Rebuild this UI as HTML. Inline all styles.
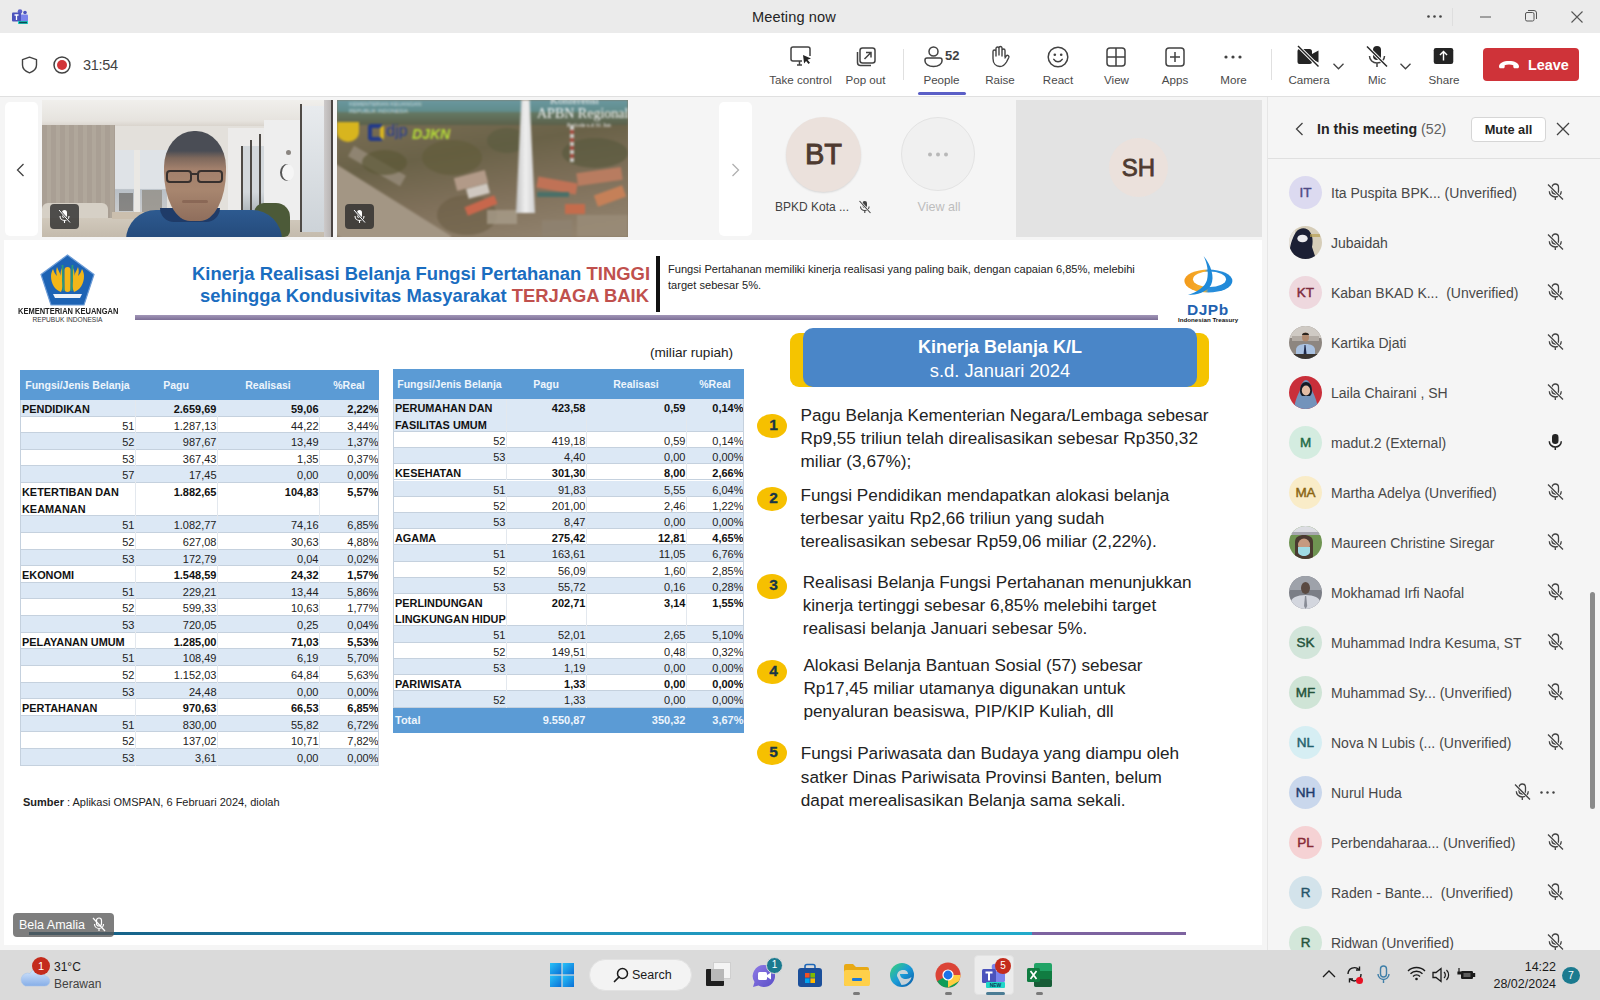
<!DOCTYPE html>
<html><head><meta charset="utf-8">
<style>
*{margin:0;padding:0;box-sizing:border-box}
html,body{width:1600px;height:1000px;overflow:hidden;background:#f5f5f5;font-family:"Liberation Sans",sans-serif;color:#242424}
.a{position:absolute}
#titlebar{left:0;top:0;width:1600px;height:33px;background:#ebebeb}
#toolbar{left:0;top:33px;width:1600px;height:64px;background:#fff;border-bottom:1px solid #e0e0e0}
#content{left:0;top:97px;width:1267px;height:853px;background:#f5f5f5}
#panel{left:1267px;top:97px;width:333px;height:853px;background:#f5f5f5;border-left:1px solid #e6e6e6}
#taskbar{left:0;top:950px;width:1600px;height:50px;background:#dadada}
.tb{font-size:11.6px;color:#4a4a4a;text-align:center;white-space:nowrap}
svg{position:absolute;overflow:visible}
</style></head><body>
<div id="titlebar" class="a">
<svg style="left:12px;top:9px" width="18" height="16" viewBox="0 0 18 16">
<circle cx="8" cy="2.5" r="2.3" fill="#5b5fc7"/><circle cx="13" cy="3.5" r="1.8" fill="#4b53bc"/>
<rect x="8" y="5.5" width="8" height="7" rx="1" fill="#7b83eb"/>
<rect x="0" y="3.5" width="9" height="9" rx="1" fill="#4b53bc"/>
<path d="M2.5 6h4M4.5 6v5" stroke="#fff" stroke-width="1.3"/>
<rect x="6" y="12" width="10" height="3" fill="#22d3c5"/><rect x="7" y="12.7" width="8" height="1.6" fill="#0b4a56"/>
</svg>
<div class="a" style="left:752px;top:9px;font-size:14.6px;color:#242424;letter-spacing:0.1px">Meeting now</div>
<svg style="left:1427px;top:15px" width="16" height="4"><circle cx="1.5" cy="1.5" r="1.3" fill="#444"/><circle cx="7.5" cy="1.5" r="1.3" fill="#444"/><circle cx="13.5" cy="1.5" r="1.3" fill="#444"/></svg>
<div class="a" style="left:1452px;top:8px;width:1px;height:18px;background:#dedede"></div>
<svg style="left:1480px;top:16px" width="12" height="2"><path d="M0 1h11" stroke="#555" stroke-width="1"/></svg>
<svg style="left:1525px;top:10px" width="12" height="12"><rect x="0.5" y="2.5" width="8.5" height="8.5" rx="1.5" fill="none" stroke="#555"/><path d="M3 0.5h6a2.5 2.5 0 0 1 2.5 2.5v6" fill="none" stroke="#555"/></svg>
<svg style="left:1571px;top:11px" width="12" height="12"><path d="M0.5 0.5l11 11M11.5 0.5l-11 11" stroke="#555" stroke-width="1.1"/></svg>
</div>
<div id="toolbar" class="a">
<svg style="left:21px;top:23px" width="17" height="18" viewBox="0 0 17 18"><path d="M8.5 1.2L15.5 3.6V9c0 3.6-2.8 6.3-7 7.8C4.3 15.3 1.5 12.6 1.5 9V3.6z" fill="none" stroke="#424242" stroke-width="1.4" stroke-linejoin="round"/></svg>
<svg style="left:53px;top:23px" width="18" height="18" viewBox="0 0 18 18"><circle cx="9" cy="9" r="8" fill="none" stroke="#424242" stroke-width="1.5"/><circle cx="9" cy="9" r="5" fill="#d13438"/></svg>
<div class="a" style="left:83px;top:24px;font-size:14.5px;color:#424242;letter-spacing:-0.3px">31:54</div>

<svg style="left:790px;top:13px" width="22" height="22" viewBox="0 0 22 22"><path d="M12 15H3a2 2 0 0 1-2-2V3a2 2 0 0 1 2-2h15a2 2 0 0 1 2 2v7" fill="none" stroke="#424242" stroke-width="1.5"/><path d="M7 19h5M9.5 15v4" stroke="#424242" stroke-width="1.5"/><path d="M13 9l8 3.5-3.5 1.2 2.5 3-1.5 1.3-2.4-3.1-2 2.6z" fill="#242424"/></svg>
<svg style="left:856px;top:14px" width="20" height="20" viewBox="0 0 20 20"><rect x="4" y="1" width="15" height="15" rx="2.5" fill="none" stroke="#424242" stroke-width="1.5"/><path d="M1.5 5v10.5a3 3 0 0 0 3 3H15" fill="none" stroke="#424242" stroke-width="1.5"/><path d="M8.5 12l6-6M10 5.5h5v5" fill="none" stroke="#424242" stroke-width="1.5"/></svg>
<div class="a" style="left:903px;top:16px;width:1px;height:31px;background:#e0e0e0"></div>
<svg style="left:924px;top:13px" width="19" height="22" viewBox="0 0 19 22"><circle cx="9.5" cy="5.5" r="4.5" fill="none" stroke="#424242" stroke-width="1.5"/><path d="M3 12h13a2 2 0 0 1 2 2v1c0 3-3.5 5.5-8.5 5.5S1 18 1 15v-1a2 2 0 0 1 2-2z" fill="none" stroke="#424242" stroke-width="1.5"/></svg>
<div class="a" style="left:945px;top:15px;font-size:13px;font-weight:bold;color:#424242">52</div>
<div class="a" style="left:918px;top:59px;width:48px;height:3px;border-radius:2px;background:#5b5fc7"></div>
<svg style="left:990px;top:12px;transform:scaleX(-1)" width="20" height="23" viewBox="0 0 20 23"><path d="M5 12V5.5a1.5 1.5 0 0 1 3 0V11M8 10V3a1.5 1.5 0 0 1 3 0v7M11 10V3.5a1.5 1.5 0 0 1 3 0V11M14 11V6.5a1.5 1.5 0 0 1 3 0v7c0 5-3 8-7 8-3 0-5-2-6.5-4.5L1.2 12.5a1.5 1.5 0 0 1 2.5-1.6L5 13" fill="none" stroke="#424242" stroke-width="1.4" stroke-linejoin="round" stroke-linecap="round"/></svg>
<svg style="left:1047px;top:13px" width="22" height="22" viewBox="0 0 22 22"><circle cx="11" cy="11" r="9.8" fill="none" stroke="#424242" stroke-width="1.5"/><circle cx="7.8" cy="8.7" r="1.3" fill="#424242"/><circle cx="14.2" cy="8.7" r="1.3" fill="#424242"/><path d="M6.8 13.3c1 1.6 2.5 2.4 4.2 2.4s3.2-.8 4.2-2.4" fill="none" stroke="#424242" stroke-width="1.5" stroke-linecap="round"/></svg>
<svg style="left:1106px;top:14px" width="20" height="20" viewBox="0 0 20 20"><rect x="1" y="1" width="18" height="18" rx="3" fill="none" stroke="#424242" stroke-width="1.5"/><path d="M10 1v18M1 10h18" stroke="#424242" stroke-width="1.5"/></svg>
<svg style="left:1165px;top:14px" width="20" height="20" viewBox="0 0 20 20"><rect x="1" y="1" width="18" height="18" rx="3" fill="none" stroke="#424242" stroke-width="1.5"/><path d="M10 5v10M5 10h10" stroke="#424242" stroke-width="1.5"/></svg>
<svg style="left:1224px;top:22px" width="18" height="4"><circle cx="2" cy="2" r="1.6" fill="#424242"/><circle cx="9" cy="2" r="1.6" fill="#424242"/><circle cx="16" cy="2" r="1.6" fill="#424242"/></svg>
<div class="a" style="left:1271px;top:16px;width:1px;height:31px;background:#e0e0e0"></div>
<svg style="left:1297px;top:12px" width="23" height="23" viewBox="0 0 23 23"><path d="M2.5 4h10a2.5 2.5 0 0 1 2.5 2.5v10a2.5 2.5 0 0 1-2.5 2.5h-10A2 2 0 0 1 .5 17V6a2 2 0 0 1 2-2z" fill="#242424"/><path d="M15 9l6.5-3.5v12L15 14z" fill="#242424"/><path d="M1 1l20.5 20.5" stroke="#fff" stroke-width="3.2"/><path d="M1 1l20.5 20.5" stroke="#242424" stroke-width="1.5"/></svg>
<svg style="left:1333px;top:30px" width="11" height="7"><path d="M0.5 0.8l5 5 5-5" fill="none" stroke="#424242" stroke-width="1.3"/></svg>
<svg style="left:1366px;top:12px" width="22" height="23" viewBox="0 0 22 23"><rect x="7" y="1" width="8" height="14" rx="4" fill="#242424"/><path d="M3.5 11c0 4 3.3 7 7.5 7s7.5-3 7.5-7M11 18v4" fill="none" stroke="#424242" stroke-width="1.5"/><path d="M1 1.5l20 20" stroke="#fff" stroke-width="3.2"/><path d="M1 1.5l20 20" stroke="#242424" stroke-width="1.5"/></svg>
<svg style="left:1400px;top:30px" width="11" height="7"><path d="M0.5 0.8l5 5 5-5" fill="none" stroke="#424242" stroke-width="1.3"/></svg>
<svg style="left:1433px;top:15px" width="21" height="16" viewBox="0 0 22 18"><rect x="0" y="0" width="22" height="18" rx="2.5" fill="#242424"/><path d="M11 14V4.5M7 8l4-4 4 4" fill="none" stroke="#fff" stroke-width="1.6"/></svg>
<div class="a" style="left:1483px;top:15px;width:96px;height:33px;border-radius:4px;background:#cf3339"></div>
<svg style="left:1498px;top:27px" width="22" height="9" viewBox="0 0 22 9"><path d="M1 6.5C1 3 5.5 1 11 1s10 2 10 5.5c0 1-.5 1.8-1.6 1.8h-2.6c-1 0-1.5-.6-1.5-1.5V5.3c-1.2-.5-2.6-.7-4.3-.7s-3.1.2-4.3.7v1.5c0 .9-.5 1.5-1.5 1.5H2.6C1.5 8.3 1 7.5 1 6.5z" fill="#fff"/></svg>
<div class="a" style="left:1528px;top:24px;font-size:14.4px;font-weight:bold;color:#fff">Leave</div>
<div class="a tb" style="left:760.5px;top:40px;width:80px;">Take control</div><div class="a tb" style="left:825.5px;top:40px;width:80px;">Pop out</div><div class="a tb" style="left:901.5px;top:40px;width:80px;">People</div><div class="a tb" style="left:960px;top:40px;width:80px;">Raise</div><div class="a tb" style="left:1018px;top:40px;width:80px;">React</div><div class="a tb" style="left:1076.5px;top:40px;width:80px;">View</div><div class="a tb" style="left:1135px;top:40px;width:80px;">Apps</div><div class="a tb" style="left:1193.5px;top:40px;width:80px;">More</div><div class="a tb" style="left:1269px;top:40px;width:80px;">Camera</div><div class="a tb" style="left:1337px;top:40px;width:80px;">Mic</div><div class="a tb" style="left:1404px;top:40px;width:80px;">Share</div></div>
<div id="content" class="a">
<!-- video strip: page y 100-237 ; content top = 97 -->
<div class="a" style="left:5px;top:5px;width:33px;height:134px;background:#fff;border-radius:5px"></div>
<svg style="left:16px;top:66px" width="9" height="14"><path d="M7.5 1L1.5 7l6 6" fill="none" stroke="#424242" stroke-width="1.3"/></svg>
<div id="vid1" class="a" style="left:42px;top:3px;width:291px;height:137px;overflow:hidden;background:#e3e0db"><div class="a" style="left:0;top:0;width:291px;height:137px;filter:blur(0.5px)">
<div class="a" style="left:0;top:0;width:291px;height:26px;background:linear-gradient(#f0efec,#e6e3de 80%,#d9d4cd)"></div>
<div class="a" style="left:0;top:25px;width:73px;height:96px;background:repeating-linear-gradient(90deg,#a99f94 0 5px,#b0a79b 5px 9px)"></div>
<div class="a" style="left:73px;top:50px;width:52px;height:62px;background:linear-gradient(#dfe3e7 0 62%,#b9c0c7 64%,#c9cbcc)"></div>
<div class="a" style="left:92px;top:50px;width:6px;height:62px;background:#eae8e4"></div>
<div class="a" style="left:77px;top:93px;width:14px;height:18px;background:#5e5a55;opacity:.6"></div>
<div class="a" style="left:100px;top:90px;width:20px;height:22px;background:#8d877e;opacity:.7"></div>
<div class="a" style="left:0;top:103px;width:66px;height:28px;background:#d6d0c6;border-radius:6px 6px 0 0"></div>
<div class="a" style="left:0;top:118px;width:291px;height:19px;background:linear-gradient(#d1c9bc,#c4bbad)"></div>
<div class="a" style="left:70px;top:112px;width:150px;height:7px;background:#cbbfae"></div>
<div class="a" style="left:186px;top:28px;width:70px;height:92px;background:#ecebea"></div>
<div class="a" style="left:199px;top:46px;width:48px;height:66px;background:linear-gradient(#d3d8dc 0 70%,#aeb5ba)"></div>
<div class="a" style="left:199px;top:46px;width:2px;height:66px;background:#4e4a46"></div>
<div class="a" style="left:208px;top:40px;width:2px;height:74px;background:#4e4a46"></div>
<div class="a" style="left:217px;top:34px;width:2px;height:80px;background:#4e4a46"></div>
<div class="a" style="left:222px;top:20px;width:36px;height:100px;background:#eeeeee"></div>
<div class="a" style="left:238px;top:64px;width:14px;height:17px;border-radius:50%;background:#f5f5f5;box-shadow:inset 2px 0 0 #555"></div>
<div class="a" style="left:244px;top:50px;width:5px;height:5px;border-radius:50%;background:#8a8580"></div>
<div class="a" style="left:258px;top:6px;width:24px;height:126px;background:linear-gradient(#e8ebee,#cdd3d8)"></div>
<div class="a" style="left:258px;top:4px;width:2px;height:128px;background:#4f4b47"></div>
<div class="a" style="left:282px;top:0;width:8px;height:137px;background:linear-gradient(90deg,#cdcaca,#b5b1b0)"></div>
<div class="a" style="left:289px;top:0;width:2px;height:137px;background:#4a4442"></div>
<div class="a" style="left:212px;top:103px;width:36px;height:34px;border-radius:10px 14px 6px 6px;background:#4c5a38"></div>
<div class="a" style="left:84px;top:110px;width:156px;height:32px;border-radius:30px 30px 0 0;background:linear-gradient(#2d5a90,#234878)"></div>
<div class="a" style="left:118px;top:108px;width:60px;height:14px;border-radius:0 0 30px 30px;background:#1f3b68"></div>
<div class="a" style="left:122px;top:31px;width:62px;height:90px;border-radius:48% 48% 42% 42%/40% 40% 55% 55%;background:linear-gradient(#4a4d55 0 22%,#7d685c 30%,#a2806c 42%,#a8866f 65%,#8f6e5c)"></div>
<div class="a" style="left:124px;top:70px;width:26px;height:13px;border-radius:4px;border:2.2px solid #37302e"></div>
<div class="a" style="left:155px;top:70px;width:26px;height:13px;border-radius:4px;border:2.2px solid #37302e"></div>
<div class="a" style="left:149px;top:73px;width:7px;height:2px;background:#37302e"></div>
<div class="a" style="left:140px;top:100px;width:26px;height:3px;background:#7d5a4b;border-radius:2px;opacity:.6"></div>
</div></div>
<div id="vid2" class="a" style="left:337px;top:3px;width:291px;height:137px;overflow:hidden;background:#857660"><div class="a" style="left:0;top:0;width:291px;height:137px;filter:blur(0.8px)">
<div class="a" style="left:0;top:0;width:291px;height:13px;background:linear-gradient(#6a98a0,#5f8a88)"></div>
<div class="a" style="left:0;top:12px;width:291px;height:13px;background:linear-gradient(#657a66,#5b604a)"></div>
<div class="a" style="left:0;top:25px;width:291px;height:112px;background:linear-gradient(170deg,#7a6e55 0%,#6a6248 30%,#7f705a 60%,#958672 100%)"></div>
<div class="a" style="left:-40px;top:92px;width:150px;height:60px;background:#a39684;transform:rotate(32deg)"></div>
<div class="a" style="left:10px;top:60px;width:60px;height:12px;background:#9d9282;transform:rotate(30deg);opacity:.7"></div>
<div class="a" style="left:25px;top:50px;width:45px;height:25px;border-radius:50%;background:#5c5838;opacity:.7"></div>
<div class="a" style="left:85px;top:40px;width:60px;height:35px;border-radius:50%;background:#625c3c;opacity:.7"></div>
<div class="a" style="left:100px;top:95px;width:60px;height:40px;border-radius:50%;background:#6a5e45;opacity:.6"></div>
<div class="a" style="left:225px;top:38px;width:66px;height:30px;border-radius:50%;background:#5a5a3e;opacity:.7"></div>
<div class="a" style="left:150px;top:28px;width:40px;height:25px;border-radius:50%;background:#5a5c40;opacity:.6"></div>
<div class="a" style="left:118px;top:74px;width:32px;height:13px;background:#b29a88;transform:rotate(-15deg)"></div>
<div class="a" style="left:130px;top:86px;width:22px;height:10px;background:#cfc8c0;transform:rotate(-15deg)"></div>
<div class="a" style="left:128px;top:101px;width:32px;height:9px;background:#c8674c;transform:rotate(-22deg)"></div>
<div class="a" style="left:150px;top:110px;width:30px;height:14px;background:#a89c8a;opacity:.8"></div>
<div class="a" style="left:200px;top:80px;width:40px;height:11px;background:#c07256;transform:rotate(10deg)"></div>
<div class="a" style="left:240px;top:70px;width:45px;height:13px;background:#b87c60;transform:rotate(-8deg)"></div>
<div class="a" style="left:228px;top:104px;width:20px;height:10px;background:#c46c4c"></div>
<div class="a" style="left:258px;top:90px;width:30px;height:12px;background:#c58058;transform:rotate(-20deg)"></div>
<div class="a" style="left:200px;top:92px;width:32px;height:5px;background:#4a7068"></div>
<div class="a" style="left:240px;top:115px;width:51px;height:22px;background:#9a8c78;opacity:.8"></div>
<div class="a" style="left:205px;top:120px;width:30px;height:17px;background:#8f8270;opacity:.8"></div>
<div class="a" style="left:233px;top:26px;width:4px;height:36px;background:repeating-linear-gradient(#e0e0e0 0 4px,#b44a40 4px 8px);opacity:.8"></div>
<div class="a" style="left:179px;top:0;width:19px;height:113px;background:linear-gradient(90deg,#c2c2c2,#efefef 50%,#cfcfcf);clip-path:polygon(28% 0,72% 0,100% 100%,0 100%)"></div>
<div class="a" style="left:0;top:22px;width:22px;height:20px;border-radius:0 0 50% 50%;background:#d8b51e"></div>
<div class="a" style="left:31px;top:24px;width:16px;height:17px;border-radius:4px;border:4px solid #233a8a;border-right-color:#d9b520"></div>
<div class="a" style="left:49px;top:22px;font-size:16px;font-weight:normal;color:#2a3f8f">djp</div>
<div class="a" style="left:75px;top:26px;font-size:14px;font-weight:bold;font-style:italic;color:#b4d838">DJKN</div>
<div class="a" style="left:12px;top:1px;font-size:5.5px;line-height:7px;color:#d8e4e8;white-space:nowrap;opacity:.85">KEMENTERIAN KEUANGAN<br>REPUBLIK INDONESIA</div>
<div class="a" style="left:200px;top:6px;font-size:14px;font-family:'Liberation Serif';color:#f4f4f4;white-space:nowrap">APBN Regional B</div>
<div class="a" style="left:213px;top:-6px;font-size:11px;font-family:'Liberation Serif';color:#f0f0f0;white-space:nowrap">Konferensi</div>
<div class="a" style="left:230px;top:22px;font-size:6px;font-family:'Liberation Serif';color:#f0f0f0;white-space:nowrap">Periode s.d 31 Jan</div>
</div></div>
<div class="a" style="left:50px;top:107px;width:29px;height:25px;border-radius:4px;background:rgba(40,40,40,.78)"></div>
<svg style="left:58px;top:112px" width="13" height="15" viewBox="0 0 13 15"><rect x="4" y="1" width="5" height="8" rx="2.5" fill="#fff"/><path d="M2 7c0 2.5 2 4.5 4.5 4.5S11 9.5 11 7M6.5 11.5V14" fill="none" stroke="#fff" stroke-width="1.1"/><path d="M1 1l11 12.5" stroke="#444" stroke-width="2.2"/><path d="M1 1l11 12.5" stroke="#fff" stroke-width="1"/></svg>
<div class="a" style="left:345px;top:107px;width:29px;height:25px;border-radius:4px;background:rgba(40,40,40,.78)"></div>
<svg style="left:353px;top:112px" width="13" height="15" viewBox="0 0 13 15"><rect x="4" y="1" width="5" height="8" rx="2.5" fill="#fff"/><path d="M2 7c0 2.5 2 4.5 4.5 4.5S11 9.5 11 7M6.5 11.5V14" fill="none" stroke="#fff" stroke-width="1.1"/><path d="M1 1l11 12.5" stroke="#444" stroke-width="2.2"/><path d="M1 1l11 12.5" stroke="#fff" stroke-width="1"/></svg>
<div class="a" style="left:719px;top:5px;width:33px;height:134px;background:#fff;border-radius:5px"></div>
<svg style="left:731px;top:66px" width="9" height="14"><path d="M1.5 1l6 6-6 6" fill="none" stroke="#b0b0b0" stroke-width="1.3"/></svg>
<div class="a" style="left:786px;top:20px;width:75px;height:75px;border-radius:50%;background:#ebe1dc;box-shadow:0 1px 2px rgba(0,0,0,.12)"></div>
<div class="a" style="left:786px;top:20px;width:75px;height:75px;line-height:75px;text-align:center;font-size:29px;font-weight:normal;-webkit-text-stroke:0.9px #4e3a30;color:#4e3a30">BT</div>
<div class="a" style="left:775px;top:103px;font-size:12px;color:#424242;white-space:nowrap">BPKD Kota ...</div>
<svg style="left:858px;top:103px" width="14" height="14" viewBox="0 0 14 14"><rect x="4.5" y="1" width="4.5" height="7" rx="2.2" fill="#424242"/><path d="M2.5 6.5c0 2.3 1.9 4 4.3 4s4.3-1.7 4.3-4M6.8 10.5v2.5" fill="none" stroke="#424242" stroke-width="1.1"/><path d="M1.5 1l11 12" stroke="#f5f5f5" stroke-width="2.2"/><path d="M1.5 1l11 12" stroke="#424242" stroke-width="1.1"/></svg>
<div class="a" style="left:901px;top:20px;width:74px;height:74px;border-radius:50%;background:#f0f0f0;border:1px solid #e3e3e3"></div>
<svg style="left:927px;top:55px" width="22" height="5"><circle cx="3" cy="2.5" r="2" fill="#b8b8b8"/><circle cx="11" cy="2.5" r="2" fill="#b8b8b8"/><circle cx="19" cy="2.5" r="2" fill="#b8b8b8"/></svg>
<div class="a" style="left:917.5px;top:103px;font-size:12.6px;color:#bdbdbd;white-space:nowrap">View all</div>
<div class="a" style="left:1016px;top:3px;width:246px;height:137px;background:#e3e3e3"></div>
<div class="a" style="left:1109px;top:41px;width:59px;height:59px;border-radius:50%;background:#ebe1dc"></div>
<div class="a" style="left:1109px;top:41px;width:59px;height:59px;line-height:59px;text-align:center;font-size:24px;font-weight:normal;-webkit-text-stroke:0.8px #4e3a30;color:#4e3a30">SH</div>
<!-- slide -->
<div id="slide" class="a" style="left:4px;top:143px;width:1258px;height:705px;background:#fff;overflow:hidden"></div>
</div>
<div id="slidec" class="a" style="left:0;top:0;width:0;height:0">
<svg style="left:40px;top:254px" width="56" height="52" viewBox="0 0 56 52">
<path d="M27.5 1L54 20.5 44 51H11L1 20.5z" fill="#1d63b4" stroke="#6b9bd6" stroke-width="1.2"/>
<path d="M21 38c-6-2-10-8-10-16 0-3 1-5 2-7 1 3 2 5 4 7-1-3-1-6 0-9 1 3 3 6 4 9-1-3 0-6 1-8 1 4 1 8 0 12 1 4 1 8-1 12z" fill="#f2b619"/>
<path d="M34 38c6-2 10-8 10-16 0-3-1-5-2-7-1 3-2 5-4 7 1-3 1-6 0-9-1 3-3 6-4 9 1-3 0-6-1-8-1 4-1 8 0 12-1 4-1 8 1 12z" fill="#f2b619"/>
<rect x="24.5" y="13" width="6" height="25" rx="3" fill="#f2b619"/>
<path d="M22.5 11l1 26M32.5 11l-1 26" stroke="#2c9a78" stroke-width="1.8"/>
<path d="M13 40h29l-2 4H15z" fill="#eef2f8"/>
</svg>
<div class="a" style="left:17.5px;top:305px;font-size:9.4px;line-height:11px;font-weight:bold;color:#222;white-space:nowrap;transform-origin:0 0;transform:scaleX(0.8)">KEMENTERIAN KEUANGAN</div>
<div class="a" style="left:16px;top:315.5px;width:103px;text-align:center;font-size:6.6px;color:#333;white-space:nowrap">REPUBUK INDONESIA</div>
<div class="a" style="left:192px;top:263px;font-size:18.45px;font-weight:bold;color:#1a6dc0;white-space:nowrap">Kinerja Realisasi Belanja Fungsi Pertahanan <span style="color:#c0504d">TINGGI</span></div>
<div class="a" style="left:200px;top:285px;font-size:18.4px;font-weight:bold;color:#1a6dc0;white-space:nowrap">sehingga Kondusivitas Masyarakat <span style="color:#c0504d">TERJAGA BAIK</span></div>
<div class="a" style="left:656px;top:256px;width:4px;height:56px;background:#111"></div>
<div class="a" style="left:668px;top:262px;font-size:11.1px;line-height:15.6px;color:#222;white-space:nowrap">Fungsi Pertahanan memiliki kinerja realisasi yang paling baik, dengan capaian 6,85%, melebihi<br>target sebesar 5%.</div>
<div class="a" style="left:135px;top:315px;width:1023px;height:5px;background:linear-gradient(#a296b8,#7c6f96)"></div>
<svg style="left:1175px;top:250px" width="60" height="50" viewBox="0 0 60 50"><defs><linearGradient id="dj" x1="0" y1="0" x2="1" y2="0"><stop offset="0" stop-color="#f39a1a"/><stop offset=".42" stop-color="#f5b030"/><stop offset=".5" stop-color="#2a8fdc"/><stop offset="1" stop-color="#1e88d8"/></linearGradient></defs>
<ellipse cx="33.4" cy="31" rx="24" ry="11.5" fill="url(#dj)"/>
<ellipse cx="34.5" cy="29.3" rx="16.5" ry="7.8" fill="#fff"/>
<path d="M28.6 6C36 15 40 27 36 35C32 42 22 45 13 45C22 42 30 37 32 30C34 22 32 13 28.6 6z" fill="#1f8ad9"/>
</svg>
<div class="a" style="left:1187px;top:301px;font-size:15.5px;font-weight:bold;color:#1f62b0;white-space:nowrap;letter-spacing:0.5px">DJPb</div>
<div class="a" style="left:1178px;top:315.5px;font-size:6.2px;font-weight:bold;color:#111;white-space:nowrap">Indonesian Treasury</div>
<div class="a" style="left:650px;top:345px;font-size:13.6px;color:#222;white-space:nowrap">(miliar rupiah)</div>
<div class="a" style="left:20px;top:369.5px;width:359px;height:30.5px;background:#5b9bd5"></div>
<div class="a" style="left:20px;top:377.75px;width:115px;text-align:center;font-size:10.5px;line-height:14px;font-weight:bold;color:#eef5fc;white-space:nowrap">Fungsi/Jenis Belanja</div>
<div class="a" style="left:135px;top:377.75px;width:82px;text-align:center;font-size:10.5px;line-height:14px;font-weight:bold;color:#eef5fc;white-space:nowrap">Pagu</div>
<div class="a" style="left:217px;top:377.75px;width:102px;text-align:center;font-size:10.5px;line-height:14px;font-weight:bold;color:#eef5fc;white-space:nowrap">Realisasi</div>
<div class="a" style="left:319px;top:377.75px;width:60px;text-align:center;font-size:10.5px;line-height:14px;font-weight:bold;color:#eef5fc;white-space:nowrap">%Real</div>
<div class="a" style="left:20px;top:400.00px;width:359px;height:16.62px;background:#dce8f5;border-bottom:1px solid #c5d1de"></div>
<div class="a" style="left:135px;top:400.00px;width:1px;height:16.62px;background:#e3e8ee"></div>
<div class="a" style="left:217px;top:400.00px;width:1px;height:16.62px;background:#e3e8ee"></div>
<div class="a" style="left:319px;top:400.00px;width:1px;height:16.62px;background:#e3e8ee"></div>
<div class="a" style="left:22px;top:401.00px;font-size:10.9px;line-height:16.62px;font-weight:bold;color:#111;white-space:nowrap">PENDIDIKAN</div>
<div class="a" style="left:135px;top:401.00px;width:81.5px;text-align:right;font-size:11px;line-height:16.62px;font-weight:bold;color:#111">2.659,69</div>
<div class="a" style="left:217px;top:401.00px;width:101.5px;text-align:right;font-size:11px;line-height:16.62px;font-weight:bold;color:#111">59,06</div>
<div class="a" style="left:319px;top:401.00px;width:59.5px;text-align:right;font-size:11px;line-height:16.62px;font-weight:bold;color:#111">2,22%</div>
<div class="a" style="left:20px;top:416.62px;width:359px;height:16.62px;background:#ffffff;border-bottom:1px solid #c5d1de"></div>
<div class="a" style="left:135px;top:416.62px;width:1px;height:16.62px;background:#e3e8ee"></div>
<div class="a" style="left:217px;top:416.62px;width:1px;height:16.62px;background:#e3e8ee"></div>
<div class="a" style="left:319px;top:416.62px;width:1px;height:16.62px;background:#e3e8ee"></div>
<div class="a" style="left:20px;top:417.62px;width:114.5px;text-align:right;font-size:11px;line-height:16.62px;color:#222">51</div>
<div class="a" style="left:135px;top:417.62px;width:81.5px;text-align:right;font-size:11px;line-height:16.62px;font-weight:normal;color:#222">1.287,13</div>
<div class="a" style="left:217px;top:417.62px;width:101.5px;text-align:right;font-size:11px;line-height:16.62px;font-weight:normal;color:#222">44,22</div>
<div class="a" style="left:319px;top:417.62px;width:59.5px;text-align:right;font-size:11px;line-height:16.62px;font-weight:normal;color:#222">3,44%</div>
<div class="a" style="left:20px;top:433.24px;width:359px;height:16.62px;background:#dce8f5;border-bottom:1px solid #c5d1de"></div>
<div class="a" style="left:135px;top:433.24px;width:1px;height:16.62px;background:#e3e8ee"></div>
<div class="a" style="left:217px;top:433.24px;width:1px;height:16.62px;background:#e3e8ee"></div>
<div class="a" style="left:319px;top:433.24px;width:1px;height:16.62px;background:#e3e8ee"></div>
<div class="a" style="left:20px;top:434.24px;width:114.5px;text-align:right;font-size:11px;line-height:16.62px;color:#222">52</div>
<div class="a" style="left:135px;top:434.24px;width:81.5px;text-align:right;font-size:11px;line-height:16.62px;font-weight:normal;color:#222">987,67</div>
<div class="a" style="left:217px;top:434.24px;width:101.5px;text-align:right;font-size:11px;line-height:16.62px;font-weight:normal;color:#222">13,49</div>
<div class="a" style="left:319px;top:434.24px;width:59.5px;text-align:right;font-size:11px;line-height:16.62px;font-weight:normal;color:#222">1,37%</div>
<div class="a" style="left:20px;top:449.86px;width:359px;height:16.62px;background:#ffffff;border-bottom:1px solid #c5d1de"></div>
<div class="a" style="left:135px;top:449.86px;width:1px;height:16.62px;background:#e3e8ee"></div>
<div class="a" style="left:217px;top:449.86px;width:1px;height:16.62px;background:#e3e8ee"></div>
<div class="a" style="left:319px;top:449.86px;width:1px;height:16.62px;background:#e3e8ee"></div>
<div class="a" style="left:20px;top:450.86px;width:114.5px;text-align:right;font-size:11px;line-height:16.62px;color:#222">53</div>
<div class="a" style="left:135px;top:450.86px;width:81.5px;text-align:right;font-size:11px;line-height:16.62px;font-weight:normal;color:#222">367,43</div>
<div class="a" style="left:217px;top:450.86px;width:101.5px;text-align:right;font-size:11px;line-height:16.62px;font-weight:normal;color:#222">1,35</div>
<div class="a" style="left:319px;top:450.86px;width:59.5px;text-align:right;font-size:11px;line-height:16.62px;font-weight:normal;color:#222">0,37%</div>
<div class="a" style="left:20px;top:466.48px;width:359px;height:16.62px;background:#dce8f5;border-bottom:1px solid #c5d1de"></div>
<div class="a" style="left:135px;top:466.48px;width:1px;height:16.62px;background:#e3e8ee"></div>
<div class="a" style="left:217px;top:466.48px;width:1px;height:16.62px;background:#e3e8ee"></div>
<div class="a" style="left:319px;top:466.48px;width:1px;height:16.62px;background:#e3e8ee"></div>
<div class="a" style="left:20px;top:467.48px;width:114.5px;text-align:right;font-size:11px;line-height:16.62px;color:#222">57</div>
<div class="a" style="left:135px;top:467.48px;width:81.5px;text-align:right;font-size:11px;line-height:16.62px;font-weight:normal;color:#222">17,45</div>
<div class="a" style="left:217px;top:467.48px;width:101.5px;text-align:right;font-size:11px;line-height:16.62px;font-weight:normal;color:#222">0,00</div>
<div class="a" style="left:319px;top:467.48px;width:59.5px;text-align:right;font-size:11px;line-height:16.62px;font-weight:normal;color:#222">0,00%</div>
<div class="a" style="left:20px;top:483.10px;width:359px;height:33.24px;background:#ffffff;border-bottom:1px solid #c5d1de"></div>
<div class="a" style="left:135px;top:483.10px;width:1px;height:33.24px;background:#e3e8ee"></div>
<div class="a" style="left:217px;top:483.10px;width:1px;height:33.24px;background:#e3e8ee"></div>
<div class="a" style="left:319px;top:483.10px;width:1px;height:33.24px;background:#e3e8ee"></div>
<div class="a" style="left:22px;top:484.10px;font-size:10.9px;line-height:16.62px;font-weight:bold;color:#111;white-space:nowrap">KETERTIBAN DAN<br>KEAMANAN</div>
<div class="a" style="left:135px;top:484.10px;width:81.5px;text-align:right;font-size:11px;line-height:16.62px;font-weight:bold;color:#111">1.882,65</div>
<div class="a" style="left:217px;top:484.10px;width:101.5px;text-align:right;font-size:11px;line-height:16.62px;font-weight:bold;color:#111">104,83</div>
<div class="a" style="left:319px;top:484.10px;width:59.5px;text-align:right;font-size:11px;line-height:16.62px;font-weight:bold;color:#111">5,57%</div>
<div class="a" style="left:20px;top:516.34px;width:359px;height:16.62px;background:#dce8f5;border-bottom:1px solid #c5d1de"></div>
<div class="a" style="left:135px;top:516.34px;width:1px;height:16.62px;background:#e3e8ee"></div>
<div class="a" style="left:217px;top:516.34px;width:1px;height:16.62px;background:#e3e8ee"></div>
<div class="a" style="left:319px;top:516.34px;width:1px;height:16.62px;background:#e3e8ee"></div>
<div class="a" style="left:20px;top:517.34px;width:114.5px;text-align:right;font-size:11px;line-height:16.62px;color:#222">51</div>
<div class="a" style="left:135px;top:517.34px;width:81.5px;text-align:right;font-size:11px;line-height:16.62px;font-weight:normal;color:#222">1.082,77</div>
<div class="a" style="left:217px;top:517.34px;width:101.5px;text-align:right;font-size:11px;line-height:16.62px;font-weight:normal;color:#222">74,16</div>
<div class="a" style="left:319px;top:517.34px;width:59.5px;text-align:right;font-size:11px;line-height:16.62px;font-weight:normal;color:#222">6,85%</div>
<div class="a" style="left:20px;top:532.96px;width:359px;height:16.62px;background:#ffffff;border-bottom:1px solid #c5d1de"></div>
<div class="a" style="left:135px;top:532.96px;width:1px;height:16.62px;background:#e3e8ee"></div>
<div class="a" style="left:217px;top:532.96px;width:1px;height:16.62px;background:#e3e8ee"></div>
<div class="a" style="left:319px;top:532.96px;width:1px;height:16.62px;background:#e3e8ee"></div>
<div class="a" style="left:20px;top:533.96px;width:114.5px;text-align:right;font-size:11px;line-height:16.62px;color:#222">52</div>
<div class="a" style="left:135px;top:533.96px;width:81.5px;text-align:right;font-size:11px;line-height:16.62px;font-weight:normal;color:#222">627,08</div>
<div class="a" style="left:217px;top:533.96px;width:101.5px;text-align:right;font-size:11px;line-height:16.62px;font-weight:normal;color:#222">30,63</div>
<div class="a" style="left:319px;top:533.96px;width:59.5px;text-align:right;font-size:11px;line-height:16.62px;font-weight:normal;color:#222">4,88%</div>
<div class="a" style="left:20px;top:549.58px;width:359px;height:16.62px;background:#dce8f5;border-bottom:1px solid #c5d1de"></div>
<div class="a" style="left:135px;top:549.58px;width:1px;height:16.62px;background:#e3e8ee"></div>
<div class="a" style="left:217px;top:549.58px;width:1px;height:16.62px;background:#e3e8ee"></div>
<div class="a" style="left:319px;top:549.58px;width:1px;height:16.62px;background:#e3e8ee"></div>
<div class="a" style="left:20px;top:550.58px;width:114.5px;text-align:right;font-size:11px;line-height:16.62px;color:#222">53</div>
<div class="a" style="left:135px;top:550.58px;width:81.5px;text-align:right;font-size:11px;line-height:16.62px;font-weight:normal;color:#222">172,79</div>
<div class="a" style="left:217px;top:550.58px;width:101.5px;text-align:right;font-size:11px;line-height:16.62px;font-weight:normal;color:#222">0,04</div>
<div class="a" style="left:319px;top:550.58px;width:59.5px;text-align:right;font-size:11px;line-height:16.62px;font-weight:normal;color:#222">0,02%</div>
<div class="a" style="left:20px;top:566.20px;width:359px;height:16.62px;background:#ffffff;border-bottom:1px solid #c5d1de"></div>
<div class="a" style="left:135px;top:566.20px;width:1px;height:16.62px;background:#e3e8ee"></div>
<div class="a" style="left:217px;top:566.20px;width:1px;height:16.62px;background:#e3e8ee"></div>
<div class="a" style="left:319px;top:566.20px;width:1px;height:16.62px;background:#e3e8ee"></div>
<div class="a" style="left:22px;top:567.20px;font-size:10.9px;line-height:16.62px;font-weight:bold;color:#111;white-space:nowrap">EKONOMI</div>
<div class="a" style="left:135px;top:567.20px;width:81.5px;text-align:right;font-size:11px;line-height:16.62px;font-weight:bold;color:#111">1.548,59</div>
<div class="a" style="left:217px;top:567.20px;width:101.5px;text-align:right;font-size:11px;line-height:16.62px;font-weight:bold;color:#111">24,32</div>
<div class="a" style="left:319px;top:567.20px;width:59.5px;text-align:right;font-size:11px;line-height:16.62px;font-weight:bold;color:#111">1,57%</div>
<div class="a" style="left:20px;top:582.82px;width:359px;height:16.62px;background:#dce8f5;border-bottom:1px solid #c5d1de"></div>
<div class="a" style="left:135px;top:582.82px;width:1px;height:16.62px;background:#e3e8ee"></div>
<div class="a" style="left:217px;top:582.82px;width:1px;height:16.62px;background:#e3e8ee"></div>
<div class="a" style="left:319px;top:582.82px;width:1px;height:16.62px;background:#e3e8ee"></div>
<div class="a" style="left:20px;top:583.82px;width:114.5px;text-align:right;font-size:11px;line-height:16.62px;color:#222">51</div>
<div class="a" style="left:135px;top:583.82px;width:81.5px;text-align:right;font-size:11px;line-height:16.62px;font-weight:normal;color:#222">229,21</div>
<div class="a" style="left:217px;top:583.82px;width:101.5px;text-align:right;font-size:11px;line-height:16.62px;font-weight:normal;color:#222">13,44</div>
<div class="a" style="left:319px;top:583.82px;width:59.5px;text-align:right;font-size:11px;line-height:16.62px;font-weight:normal;color:#222">5,86%</div>
<div class="a" style="left:20px;top:599.44px;width:359px;height:16.62px;background:#ffffff;border-bottom:1px solid #c5d1de"></div>
<div class="a" style="left:135px;top:599.44px;width:1px;height:16.62px;background:#e3e8ee"></div>
<div class="a" style="left:217px;top:599.44px;width:1px;height:16.62px;background:#e3e8ee"></div>
<div class="a" style="left:319px;top:599.44px;width:1px;height:16.62px;background:#e3e8ee"></div>
<div class="a" style="left:20px;top:600.44px;width:114.5px;text-align:right;font-size:11px;line-height:16.62px;color:#222">52</div>
<div class="a" style="left:135px;top:600.44px;width:81.5px;text-align:right;font-size:11px;line-height:16.62px;font-weight:normal;color:#222">599,33</div>
<div class="a" style="left:217px;top:600.44px;width:101.5px;text-align:right;font-size:11px;line-height:16.62px;font-weight:normal;color:#222">10,63</div>
<div class="a" style="left:319px;top:600.44px;width:59.5px;text-align:right;font-size:11px;line-height:16.62px;font-weight:normal;color:#222">1,77%</div>
<div class="a" style="left:20px;top:616.06px;width:359px;height:16.62px;background:#dce8f5;border-bottom:1px solid #c5d1de"></div>
<div class="a" style="left:135px;top:616.06px;width:1px;height:16.62px;background:#e3e8ee"></div>
<div class="a" style="left:217px;top:616.06px;width:1px;height:16.62px;background:#e3e8ee"></div>
<div class="a" style="left:319px;top:616.06px;width:1px;height:16.62px;background:#e3e8ee"></div>
<div class="a" style="left:20px;top:617.06px;width:114.5px;text-align:right;font-size:11px;line-height:16.62px;color:#222">53</div>
<div class="a" style="left:135px;top:617.06px;width:81.5px;text-align:right;font-size:11px;line-height:16.62px;font-weight:normal;color:#222">720,05</div>
<div class="a" style="left:217px;top:617.06px;width:101.5px;text-align:right;font-size:11px;line-height:16.62px;font-weight:normal;color:#222">0,25</div>
<div class="a" style="left:319px;top:617.06px;width:59.5px;text-align:right;font-size:11px;line-height:16.62px;font-weight:normal;color:#222">0,04%</div>
<div class="a" style="left:20px;top:632.68px;width:359px;height:16.62px;background:#ffffff;border-bottom:1px solid #c5d1de"></div>
<div class="a" style="left:135px;top:632.68px;width:1px;height:16.62px;background:#e3e8ee"></div>
<div class="a" style="left:217px;top:632.68px;width:1px;height:16.62px;background:#e3e8ee"></div>
<div class="a" style="left:319px;top:632.68px;width:1px;height:16.62px;background:#e3e8ee"></div>
<div class="a" style="left:22px;top:633.68px;font-size:10.9px;line-height:16.62px;font-weight:bold;color:#111;white-space:nowrap">PELAYANAN UMUM</div>
<div class="a" style="left:135px;top:633.68px;width:81.5px;text-align:right;font-size:11px;line-height:16.62px;font-weight:bold;color:#111">1.285,00</div>
<div class="a" style="left:217px;top:633.68px;width:101.5px;text-align:right;font-size:11px;line-height:16.62px;font-weight:bold;color:#111">71,03</div>
<div class="a" style="left:319px;top:633.68px;width:59.5px;text-align:right;font-size:11px;line-height:16.62px;font-weight:bold;color:#111">5,53%</div>
<div class="a" style="left:20px;top:649.30px;width:359px;height:16.62px;background:#dce8f5;border-bottom:1px solid #c5d1de"></div>
<div class="a" style="left:135px;top:649.30px;width:1px;height:16.62px;background:#e3e8ee"></div>
<div class="a" style="left:217px;top:649.30px;width:1px;height:16.62px;background:#e3e8ee"></div>
<div class="a" style="left:319px;top:649.30px;width:1px;height:16.62px;background:#e3e8ee"></div>
<div class="a" style="left:20px;top:650.30px;width:114.5px;text-align:right;font-size:11px;line-height:16.62px;color:#222">51</div>
<div class="a" style="left:135px;top:650.30px;width:81.5px;text-align:right;font-size:11px;line-height:16.62px;font-weight:normal;color:#222">108,49</div>
<div class="a" style="left:217px;top:650.30px;width:101.5px;text-align:right;font-size:11px;line-height:16.62px;font-weight:normal;color:#222">6,19</div>
<div class="a" style="left:319px;top:650.30px;width:59.5px;text-align:right;font-size:11px;line-height:16.62px;font-weight:normal;color:#222">5,70%</div>
<div class="a" style="left:20px;top:665.92px;width:359px;height:16.62px;background:#ffffff;border-bottom:1px solid #c5d1de"></div>
<div class="a" style="left:135px;top:665.92px;width:1px;height:16.62px;background:#e3e8ee"></div>
<div class="a" style="left:217px;top:665.92px;width:1px;height:16.62px;background:#e3e8ee"></div>
<div class="a" style="left:319px;top:665.92px;width:1px;height:16.62px;background:#e3e8ee"></div>
<div class="a" style="left:20px;top:666.92px;width:114.5px;text-align:right;font-size:11px;line-height:16.62px;color:#222">52</div>
<div class="a" style="left:135px;top:666.92px;width:81.5px;text-align:right;font-size:11px;line-height:16.62px;font-weight:normal;color:#222">1.152,03</div>
<div class="a" style="left:217px;top:666.92px;width:101.5px;text-align:right;font-size:11px;line-height:16.62px;font-weight:normal;color:#222">64,84</div>
<div class="a" style="left:319px;top:666.92px;width:59.5px;text-align:right;font-size:11px;line-height:16.62px;font-weight:normal;color:#222">5,63%</div>
<div class="a" style="left:20px;top:682.54px;width:359px;height:16.62px;background:#dce8f5;border-bottom:1px solid #c5d1de"></div>
<div class="a" style="left:135px;top:682.54px;width:1px;height:16.62px;background:#e3e8ee"></div>
<div class="a" style="left:217px;top:682.54px;width:1px;height:16.62px;background:#e3e8ee"></div>
<div class="a" style="left:319px;top:682.54px;width:1px;height:16.62px;background:#e3e8ee"></div>
<div class="a" style="left:20px;top:683.54px;width:114.5px;text-align:right;font-size:11px;line-height:16.62px;color:#222">53</div>
<div class="a" style="left:135px;top:683.54px;width:81.5px;text-align:right;font-size:11px;line-height:16.62px;font-weight:normal;color:#222">24,48</div>
<div class="a" style="left:217px;top:683.54px;width:101.5px;text-align:right;font-size:11px;line-height:16.62px;font-weight:normal;color:#222">0,00</div>
<div class="a" style="left:319px;top:683.54px;width:59.5px;text-align:right;font-size:11px;line-height:16.62px;font-weight:normal;color:#222">0,00%</div>
<div class="a" style="left:20px;top:699.16px;width:359px;height:16.62px;background:#ffffff;border-bottom:1px solid #c5d1de"></div>
<div class="a" style="left:135px;top:699.16px;width:1px;height:16.62px;background:#e3e8ee"></div>
<div class="a" style="left:217px;top:699.16px;width:1px;height:16.62px;background:#e3e8ee"></div>
<div class="a" style="left:319px;top:699.16px;width:1px;height:16.62px;background:#e3e8ee"></div>
<div class="a" style="left:22px;top:700.16px;font-size:10.9px;line-height:16.62px;font-weight:bold;color:#111;white-space:nowrap">PERTAHANAN</div>
<div class="a" style="left:135px;top:700.16px;width:81.5px;text-align:right;font-size:11px;line-height:16.62px;font-weight:bold;color:#111">970,63</div>
<div class="a" style="left:217px;top:700.16px;width:101.5px;text-align:right;font-size:11px;line-height:16.62px;font-weight:bold;color:#111">66,53</div>
<div class="a" style="left:319px;top:700.16px;width:59.5px;text-align:right;font-size:11px;line-height:16.62px;font-weight:bold;color:#111">6,85%</div>
<div class="a" style="left:20px;top:715.78px;width:359px;height:16.62px;background:#dce8f5;border-bottom:1px solid #c5d1de"></div>
<div class="a" style="left:135px;top:715.78px;width:1px;height:16.62px;background:#e3e8ee"></div>
<div class="a" style="left:217px;top:715.78px;width:1px;height:16.62px;background:#e3e8ee"></div>
<div class="a" style="left:319px;top:715.78px;width:1px;height:16.62px;background:#e3e8ee"></div>
<div class="a" style="left:20px;top:716.78px;width:114.5px;text-align:right;font-size:11px;line-height:16.62px;color:#222">51</div>
<div class="a" style="left:135px;top:716.78px;width:81.5px;text-align:right;font-size:11px;line-height:16.62px;font-weight:normal;color:#222">830,00</div>
<div class="a" style="left:217px;top:716.78px;width:101.5px;text-align:right;font-size:11px;line-height:16.62px;font-weight:normal;color:#222">55,82</div>
<div class="a" style="left:319px;top:716.78px;width:59.5px;text-align:right;font-size:11px;line-height:16.62px;font-weight:normal;color:#222">6,72%</div>
<div class="a" style="left:20px;top:732.40px;width:359px;height:16.62px;background:#ffffff;border-bottom:1px solid #c5d1de"></div>
<div class="a" style="left:135px;top:732.40px;width:1px;height:16.62px;background:#e3e8ee"></div>
<div class="a" style="left:217px;top:732.40px;width:1px;height:16.62px;background:#e3e8ee"></div>
<div class="a" style="left:319px;top:732.40px;width:1px;height:16.62px;background:#e3e8ee"></div>
<div class="a" style="left:20px;top:733.40px;width:114.5px;text-align:right;font-size:11px;line-height:16.62px;color:#222">52</div>
<div class="a" style="left:135px;top:733.40px;width:81.5px;text-align:right;font-size:11px;line-height:16.62px;font-weight:normal;color:#222">137,02</div>
<div class="a" style="left:217px;top:733.40px;width:101.5px;text-align:right;font-size:11px;line-height:16.62px;font-weight:normal;color:#222">10,71</div>
<div class="a" style="left:319px;top:733.40px;width:59.5px;text-align:right;font-size:11px;line-height:16.62px;font-weight:normal;color:#222">7,82%</div>
<div class="a" style="left:20px;top:749.02px;width:359px;height:16.62px;background:#dce8f5;border-bottom:1px solid #c5d1de"></div>
<div class="a" style="left:135px;top:749.02px;width:1px;height:16.62px;background:#e3e8ee"></div>
<div class="a" style="left:217px;top:749.02px;width:1px;height:16.62px;background:#e3e8ee"></div>
<div class="a" style="left:319px;top:749.02px;width:1px;height:16.62px;background:#e3e8ee"></div>
<div class="a" style="left:20px;top:750.02px;width:114.5px;text-align:right;font-size:11px;line-height:16.62px;color:#222">53</div>
<div class="a" style="left:135px;top:750.02px;width:81.5px;text-align:right;font-size:11px;line-height:16.62px;font-weight:normal;color:#222">3,61</div>
<div class="a" style="left:217px;top:750.02px;width:101.5px;text-align:right;font-size:11px;line-height:16.62px;font-weight:normal;color:#222">0,00</div>
<div class="a" style="left:319px;top:750.02px;width:59.5px;text-align:right;font-size:11px;line-height:16.62px;font-weight:normal;color:#222">0,00%</div>
<div class="a" style="left:20px;top:400.0px;width:1px;height:365.64px;background:#c5d1de"></div>
<div class="a" style="left:378px;top:400.0px;width:1px;height:365.64px;background:#c5d1de"></div>
<div class="a" style="left:393px;top:369px;width:351px;height:30.4px;background:#5b9bd5"></div>
<div class="a" style="left:393px;top:377.2px;width:113px;text-align:center;font-size:10.5px;line-height:14px;font-weight:bold;color:#eef5fc;white-space:nowrap">Fungsi/Jenis Belanja</div>
<div class="a" style="left:506px;top:377.2px;width:80px;text-align:center;font-size:10.5px;line-height:14px;font-weight:bold;color:#eef5fc;white-space:nowrap">Pagu</div>
<div class="a" style="left:586px;top:377.2px;width:100px;text-align:center;font-size:10.5px;line-height:14px;font-weight:bold;color:#eef5fc;white-space:nowrap">Realisasi</div>
<div class="a" style="left:686px;top:377.2px;width:58px;text-align:center;font-size:10.5px;line-height:14px;font-weight:bold;color:#eef5fc;white-space:nowrap">%Real</div>
<div class="a" style="left:393px;top:399.40px;width:351px;height:32.44px;background:#dce8f5;border-bottom:1px solid #c5d1de"></div>
<div class="a" style="left:506px;top:399.40px;width:1px;height:32.44px;background:#e3e8ee"></div>
<div class="a" style="left:586px;top:399.40px;width:1px;height:32.44px;background:#e3e8ee"></div>
<div class="a" style="left:686px;top:399.40px;width:1px;height:32.44px;background:#e3e8ee"></div>
<div class="a" style="left:395px;top:400.40px;font-size:10.9px;line-height:16.22px;font-weight:bold;color:#111;white-space:nowrap">PERUMAHAN DAN<br>FASILITAS UMUM</div>
<div class="a" style="left:506px;top:400.40px;width:79.5px;text-align:right;font-size:11px;line-height:16.22px;font-weight:bold;color:#111">423,58</div>
<div class="a" style="left:586px;top:400.40px;width:99.5px;text-align:right;font-size:11px;line-height:16.22px;font-weight:bold;color:#111">0,59</div>
<div class="a" style="left:686px;top:400.40px;width:57.5px;text-align:right;font-size:11px;line-height:16.22px;font-weight:bold;color:#111">0,14%</div>
<div class="a" style="left:393px;top:431.84px;width:351px;height:16.22px;background:#ffffff;border-bottom:1px solid #c5d1de"></div>
<div class="a" style="left:506px;top:431.84px;width:1px;height:16.22px;background:#e3e8ee"></div>
<div class="a" style="left:586px;top:431.84px;width:1px;height:16.22px;background:#e3e8ee"></div>
<div class="a" style="left:686px;top:431.84px;width:1px;height:16.22px;background:#e3e8ee"></div>
<div class="a" style="left:393px;top:432.84px;width:112.5px;text-align:right;font-size:11px;line-height:16.22px;color:#222">52</div>
<div class="a" style="left:506px;top:432.84px;width:79.5px;text-align:right;font-size:11px;line-height:16.22px;font-weight:normal;color:#222">419,18</div>
<div class="a" style="left:586px;top:432.84px;width:99.5px;text-align:right;font-size:11px;line-height:16.22px;font-weight:normal;color:#222">0,59</div>
<div class="a" style="left:686px;top:432.84px;width:57.5px;text-align:right;font-size:11px;line-height:16.22px;font-weight:normal;color:#222">0,14%</div>
<div class="a" style="left:393px;top:448.06px;width:351px;height:16.22px;background:#dce8f5;border-bottom:1px solid #c5d1de"></div>
<div class="a" style="left:506px;top:448.06px;width:1px;height:16.22px;background:#e3e8ee"></div>
<div class="a" style="left:586px;top:448.06px;width:1px;height:16.22px;background:#e3e8ee"></div>
<div class="a" style="left:686px;top:448.06px;width:1px;height:16.22px;background:#e3e8ee"></div>
<div class="a" style="left:393px;top:449.06px;width:112.5px;text-align:right;font-size:11px;line-height:16.22px;color:#222">53</div>
<div class="a" style="left:506px;top:449.06px;width:79.5px;text-align:right;font-size:11px;line-height:16.22px;font-weight:normal;color:#222">4,40</div>
<div class="a" style="left:586px;top:449.06px;width:99.5px;text-align:right;font-size:11px;line-height:16.22px;font-weight:normal;color:#222">0,00</div>
<div class="a" style="left:686px;top:449.06px;width:57.5px;text-align:right;font-size:11px;line-height:16.22px;font-weight:normal;color:#222">0,00%</div>
<div class="a" style="left:393px;top:464.28px;width:351px;height:16.22px;background:#ffffff;border-bottom:1px solid #c5d1de"></div>
<div class="a" style="left:506px;top:464.28px;width:1px;height:16.22px;background:#e3e8ee"></div>
<div class="a" style="left:586px;top:464.28px;width:1px;height:16.22px;background:#e3e8ee"></div>
<div class="a" style="left:686px;top:464.28px;width:1px;height:16.22px;background:#e3e8ee"></div>
<div class="a" style="left:395px;top:465.28px;font-size:10.9px;line-height:16.22px;font-weight:bold;color:#111;white-space:nowrap">KESEHATAN</div>
<div class="a" style="left:506px;top:465.28px;width:79.5px;text-align:right;font-size:11px;line-height:16.22px;font-weight:bold;color:#111">301,30</div>
<div class="a" style="left:586px;top:465.28px;width:99.5px;text-align:right;font-size:11px;line-height:16.22px;font-weight:bold;color:#111">8,00</div>
<div class="a" style="left:686px;top:465.28px;width:57.5px;text-align:right;font-size:11px;line-height:16.22px;font-weight:bold;color:#111">2,66%</div>
<div class="a" style="left:393px;top:480.50px;width:351px;height:16.22px;background:#dce8f5;border-bottom:1px solid #c5d1de"></div>
<div class="a" style="left:506px;top:480.50px;width:1px;height:16.22px;background:#e3e8ee"></div>
<div class="a" style="left:586px;top:480.50px;width:1px;height:16.22px;background:#e3e8ee"></div>
<div class="a" style="left:686px;top:480.50px;width:1px;height:16.22px;background:#e3e8ee"></div>
<div class="a" style="left:393px;top:481.50px;width:112.5px;text-align:right;font-size:11px;line-height:16.22px;color:#222">51</div>
<div class="a" style="left:506px;top:481.50px;width:79.5px;text-align:right;font-size:11px;line-height:16.22px;font-weight:normal;color:#222">91,83</div>
<div class="a" style="left:586px;top:481.50px;width:99.5px;text-align:right;font-size:11px;line-height:16.22px;font-weight:normal;color:#222">5,55</div>
<div class="a" style="left:686px;top:481.50px;width:57.5px;text-align:right;font-size:11px;line-height:16.22px;font-weight:normal;color:#222">6,04%</div>
<div class="a" style="left:393px;top:496.72px;width:351px;height:16.22px;background:#ffffff;border-bottom:1px solid #c5d1de"></div>
<div class="a" style="left:506px;top:496.72px;width:1px;height:16.22px;background:#e3e8ee"></div>
<div class="a" style="left:586px;top:496.72px;width:1px;height:16.22px;background:#e3e8ee"></div>
<div class="a" style="left:686px;top:496.72px;width:1px;height:16.22px;background:#e3e8ee"></div>
<div class="a" style="left:393px;top:497.72px;width:112.5px;text-align:right;font-size:11px;line-height:16.22px;color:#222">52</div>
<div class="a" style="left:506px;top:497.72px;width:79.5px;text-align:right;font-size:11px;line-height:16.22px;font-weight:normal;color:#222">201,00</div>
<div class="a" style="left:586px;top:497.72px;width:99.5px;text-align:right;font-size:11px;line-height:16.22px;font-weight:normal;color:#222">2,46</div>
<div class="a" style="left:686px;top:497.72px;width:57.5px;text-align:right;font-size:11px;line-height:16.22px;font-weight:normal;color:#222">1,22%</div>
<div class="a" style="left:393px;top:512.94px;width:351px;height:16.22px;background:#dce8f5;border-bottom:1px solid #c5d1de"></div>
<div class="a" style="left:506px;top:512.94px;width:1px;height:16.22px;background:#e3e8ee"></div>
<div class="a" style="left:586px;top:512.94px;width:1px;height:16.22px;background:#e3e8ee"></div>
<div class="a" style="left:686px;top:512.94px;width:1px;height:16.22px;background:#e3e8ee"></div>
<div class="a" style="left:393px;top:513.94px;width:112.5px;text-align:right;font-size:11px;line-height:16.22px;color:#222">53</div>
<div class="a" style="left:506px;top:513.94px;width:79.5px;text-align:right;font-size:11px;line-height:16.22px;font-weight:normal;color:#222">8,47</div>
<div class="a" style="left:586px;top:513.94px;width:99.5px;text-align:right;font-size:11px;line-height:16.22px;font-weight:normal;color:#222">0,00</div>
<div class="a" style="left:686px;top:513.94px;width:57.5px;text-align:right;font-size:11px;line-height:16.22px;font-weight:normal;color:#222">0,00%</div>
<div class="a" style="left:393px;top:529.16px;width:351px;height:16.22px;background:#ffffff;border-bottom:1px solid #c5d1de"></div>
<div class="a" style="left:506px;top:529.16px;width:1px;height:16.22px;background:#e3e8ee"></div>
<div class="a" style="left:586px;top:529.16px;width:1px;height:16.22px;background:#e3e8ee"></div>
<div class="a" style="left:686px;top:529.16px;width:1px;height:16.22px;background:#e3e8ee"></div>
<div class="a" style="left:395px;top:530.16px;font-size:10.9px;line-height:16.22px;font-weight:bold;color:#111;white-space:nowrap">AGAMA</div>
<div class="a" style="left:506px;top:530.16px;width:79.5px;text-align:right;font-size:11px;line-height:16.22px;font-weight:bold;color:#111">275,42</div>
<div class="a" style="left:586px;top:530.16px;width:99.5px;text-align:right;font-size:11px;line-height:16.22px;font-weight:bold;color:#111">12,81</div>
<div class="a" style="left:686px;top:530.16px;width:57.5px;text-align:right;font-size:11px;line-height:16.22px;font-weight:bold;color:#111">4,65%</div>
<div class="a" style="left:393px;top:545.38px;width:351px;height:16.22px;background:#dce8f5;border-bottom:1px solid #c5d1de"></div>
<div class="a" style="left:506px;top:545.38px;width:1px;height:16.22px;background:#e3e8ee"></div>
<div class="a" style="left:586px;top:545.38px;width:1px;height:16.22px;background:#e3e8ee"></div>
<div class="a" style="left:686px;top:545.38px;width:1px;height:16.22px;background:#e3e8ee"></div>
<div class="a" style="left:393px;top:546.38px;width:112.5px;text-align:right;font-size:11px;line-height:16.22px;color:#222">51</div>
<div class="a" style="left:506px;top:546.38px;width:79.5px;text-align:right;font-size:11px;line-height:16.22px;font-weight:normal;color:#222">163,61</div>
<div class="a" style="left:586px;top:546.38px;width:99.5px;text-align:right;font-size:11px;line-height:16.22px;font-weight:normal;color:#222">11,05</div>
<div class="a" style="left:686px;top:546.38px;width:57.5px;text-align:right;font-size:11px;line-height:16.22px;font-weight:normal;color:#222">6,76%</div>
<div class="a" style="left:393px;top:561.60px;width:351px;height:16.22px;background:#ffffff;border-bottom:1px solid #c5d1de"></div>
<div class="a" style="left:506px;top:561.60px;width:1px;height:16.22px;background:#e3e8ee"></div>
<div class="a" style="left:586px;top:561.60px;width:1px;height:16.22px;background:#e3e8ee"></div>
<div class="a" style="left:686px;top:561.60px;width:1px;height:16.22px;background:#e3e8ee"></div>
<div class="a" style="left:393px;top:562.60px;width:112.5px;text-align:right;font-size:11px;line-height:16.22px;color:#222">52</div>
<div class="a" style="left:506px;top:562.60px;width:79.5px;text-align:right;font-size:11px;line-height:16.22px;font-weight:normal;color:#222">56,09</div>
<div class="a" style="left:586px;top:562.60px;width:99.5px;text-align:right;font-size:11px;line-height:16.22px;font-weight:normal;color:#222">1,60</div>
<div class="a" style="left:686px;top:562.60px;width:57.5px;text-align:right;font-size:11px;line-height:16.22px;font-weight:normal;color:#222">2,85%</div>
<div class="a" style="left:393px;top:577.82px;width:351px;height:16.22px;background:#dce8f5;border-bottom:1px solid #c5d1de"></div>
<div class="a" style="left:506px;top:577.82px;width:1px;height:16.22px;background:#e3e8ee"></div>
<div class="a" style="left:586px;top:577.82px;width:1px;height:16.22px;background:#e3e8ee"></div>
<div class="a" style="left:686px;top:577.82px;width:1px;height:16.22px;background:#e3e8ee"></div>
<div class="a" style="left:393px;top:578.82px;width:112.5px;text-align:right;font-size:11px;line-height:16.22px;color:#222">53</div>
<div class="a" style="left:506px;top:578.82px;width:79.5px;text-align:right;font-size:11px;line-height:16.22px;font-weight:normal;color:#222">55,72</div>
<div class="a" style="left:586px;top:578.82px;width:99.5px;text-align:right;font-size:11px;line-height:16.22px;font-weight:normal;color:#222">0,16</div>
<div class="a" style="left:686px;top:578.82px;width:57.5px;text-align:right;font-size:11px;line-height:16.22px;font-weight:normal;color:#222">0,28%</div>
<div class="a" style="left:393px;top:594.04px;width:351px;height:32.44px;background:#ffffff;border-bottom:1px solid #c5d1de"></div>
<div class="a" style="left:506px;top:594.04px;width:1px;height:32.44px;background:#e3e8ee"></div>
<div class="a" style="left:586px;top:594.04px;width:1px;height:32.44px;background:#e3e8ee"></div>
<div class="a" style="left:686px;top:594.04px;width:1px;height:32.44px;background:#e3e8ee"></div>
<div class="a" style="left:395px;top:595.04px;font-size:10.9px;line-height:16.22px;font-weight:bold;color:#111;white-space:nowrap">PERLINDUNGAN<br>LINGKUNGAN HIDUP</div>
<div class="a" style="left:506px;top:595.04px;width:79.5px;text-align:right;font-size:11px;line-height:16.22px;font-weight:bold;color:#111">202,71</div>
<div class="a" style="left:586px;top:595.04px;width:99.5px;text-align:right;font-size:11px;line-height:16.22px;font-weight:bold;color:#111">3,14</div>
<div class="a" style="left:686px;top:595.04px;width:57.5px;text-align:right;font-size:11px;line-height:16.22px;font-weight:bold;color:#111">1,55%</div>
<div class="a" style="left:393px;top:626.48px;width:351px;height:16.22px;background:#dce8f5;border-bottom:1px solid #c5d1de"></div>
<div class="a" style="left:506px;top:626.48px;width:1px;height:16.22px;background:#e3e8ee"></div>
<div class="a" style="left:586px;top:626.48px;width:1px;height:16.22px;background:#e3e8ee"></div>
<div class="a" style="left:686px;top:626.48px;width:1px;height:16.22px;background:#e3e8ee"></div>
<div class="a" style="left:393px;top:627.48px;width:112.5px;text-align:right;font-size:11px;line-height:16.22px;color:#222">51</div>
<div class="a" style="left:506px;top:627.48px;width:79.5px;text-align:right;font-size:11px;line-height:16.22px;font-weight:normal;color:#222">52,01</div>
<div class="a" style="left:586px;top:627.48px;width:99.5px;text-align:right;font-size:11px;line-height:16.22px;font-weight:normal;color:#222">2,65</div>
<div class="a" style="left:686px;top:627.48px;width:57.5px;text-align:right;font-size:11px;line-height:16.22px;font-weight:normal;color:#222">5,10%</div>
<div class="a" style="left:393px;top:642.70px;width:351px;height:16.22px;background:#ffffff;border-bottom:1px solid #c5d1de"></div>
<div class="a" style="left:506px;top:642.70px;width:1px;height:16.22px;background:#e3e8ee"></div>
<div class="a" style="left:586px;top:642.70px;width:1px;height:16.22px;background:#e3e8ee"></div>
<div class="a" style="left:686px;top:642.70px;width:1px;height:16.22px;background:#e3e8ee"></div>
<div class="a" style="left:393px;top:643.70px;width:112.5px;text-align:right;font-size:11px;line-height:16.22px;color:#222">52</div>
<div class="a" style="left:506px;top:643.70px;width:79.5px;text-align:right;font-size:11px;line-height:16.22px;font-weight:normal;color:#222">149,51</div>
<div class="a" style="left:586px;top:643.70px;width:99.5px;text-align:right;font-size:11px;line-height:16.22px;font-weight:normal;color:#222">0,48</div>
<div class="a" style="left:686px;top:643.70px;width:57.5px;text-align:right;font-size:11px;line-height:16.22px;font-weight:normal;color:#222">0,32%</div>
<div class="a" style="left:393px;top:658.92px;width:351px;height:16.22px;background:#dce8f5;border-bottom:1px solid #c5d1de"></div>
<div class="a" style="left:506px;top:658.92px;width:1px;height:16.22px;background:#e3e8ee"></div>
<div class="a" style="left:586px;top:658.92px;width:1px;height:16.22px;background:#e3e8ee"></div>
<div class="a" style="left:686px;top:658.92px;width:1px;height:16.22px;background:#e3e8ee"></div>
<div class="a" style="left:393px;top:659.92px;width:112.5px;text-align:right;font-size:11px;line-height:16.22px;color:#222">53</div>
<div class="a" style="left:506px;top:659.92px;width:79.5px;text-align:right;font-size:11px;line-height:16.22px;font-weight:normal;color:#222">1,19</div>
<div class="a" style="left:586px;top:659.92px;width:99.5px;text-align:right;font-size:11px;line-height:16.22px;font-weight:normal;color:#222">0,00</div>
<div class="a" style="left:686px;top:659.92px;width:57.5px;text-align:right;font-size:11px;line-height:16.22px;font-weight:normal;color:#222">0,00%</div>
<div class="a" style="left:393px;top:675.14px;width:351px;height:16.22px;background:#ffffff;border-bottom:1px solid #c5d1de"></div>
<div class="a" style="left:506px;top:675.14px;width:1px;height:16.22px;background:#e3e8ee"></div>
<div class="a" style="left:586px;top:675.14px;width:1px;height:16.22px;background:#e3e8ee"></div>
<div class="a" style="left:686px;top:675.14px;width:1px;height:16.22px;background:#e3e8ee"></div>
<div class="a" style="left:395px;top:676.14px;font-size:10.9px;line-height:16.22px;font-weight:bold;color:#111;white-space:nowrap">PARIWISATA</div>
<div class="a" style="left:506px;top:676.14px;width:79.5px;text-align:right;font-size:11px;line-height:16.22px;font-weight:bold;color:#111">1,33</div>
<div class="a" style="left:586px;top:676.14px;width:99.5px;text-align:right;font-size:11px;line-height:16.22px;font-weight:bold;color:#111">0,00</div>
<div class="a" style="left:686px;top:676.14px;width:57.5px;text-align:right;font-size:11px;line-height:16.22px;font-weight:bold;color:#111">0,00%</div>
<div class="a" style="left:393px;top:691.36px;width:351px;height:16.22px;background:#dce8f5;border-bottom:1px solid #c5d1de"></div>
<div class="a" style="left:506px;top:691.36px;width:1px;height:16.22px;background:#e3e8ee"></div>
<div class="a" style="left:586px;top:691.36px;width:1px;height:16.22px;background:#e3e8ee"></div>
<div class="a" style="left:686px;top:691.36px;width:1px;height:16.22px;background:#e3e8ee"></div>
<div class="a" style="left:393px;top:692.36px;width:112.5px;text-align:right;font-size:11px;line-height:16.22px;color:#222">52</div>
<div class="a" style="left:506px;top:692.36px;width:79.5px;text-align:right;font-size:11px;line-height:16.22px;font-weight:normal;color:#222">1,33</div>
<div class="a" style="left:586px;top:692.36px;width:99.5px;text-align:right;font-size:11px;line-height:16.22px;font-weight:normal;color:#222">0,00</div>
<div class="a" style="left:686px;top:692.36px;width:57.5px;text-align:right;font-size:11px;line-height:16.22px;font-weight:normal;color:#222">0,00%</div>
<div class="a" style="left:393px;top:399.4px;width:1px;height:308.18px;background:#c5d1de"></div>
<div class="a" style="left:743px;top:399.4px;width:1px;height:308.18px;background:#c5d1de"></div>
<div class="a" style="left:393px;top:707.58px;width:351px;height:25px;background:#5b9bd5"></div>
<div class="a" style="left:395px;top:707.58px;font-size:11px;line-height:25px;font-weight:bold;color:#eef5fc">Total</div>
<div class="a" style="left:506px;top:707.58px;width:79.5px;text-align:right;font-size:11px;line-height:25px;font-weight:bold;color:#eef5fc">9.550,87</div>
<div class="a" style="left:586px;top:707.58px;width:99.5px;text-align:right;font-size:11px;line-height:25px;font-weight:bold;color:#eef5fc">350,32</div>
<div class="a" style="left:686px;top:707.58px;width:57.5px;text-align:right;font-size:11px;line-height:25px;font-weight:bold;color:#eef5fc">3,67%</div>
<div class="a" style="left:23px;top:796px;font-size:11px;color:#222;white-space:nowrap"><b>Sumber</b> : Aplikasi OMSPAN, 6 Februari 2024, diolah</div>
<div class="a" style="left:790px;top:333px;width:419px;height:54px;border-radius:9px;background:#f5c400"></div>
<div class="a" style="left:803px;top:328px;width:394px;height:59px;border-radius:10px;background:#4a86c8"></div>
<div class="a" style="left:803px;top:336px;width:394px;text-align:center;font-size:18px;line-height:22px;font-weight:bold;color:#fff;white-space:nowrap">Kinerja Belanja K/L</div>
<div class="a" style="left:803px;top:360px;width:394px;text-align:center;font-size:18.3px;line-height:22px;color:#fff;white-space:nowrap">s.d. Januari 2024</div>
<div class="a" style="left:757px;top:413.5px;width:30px;height:24.5px;border-radius:50%;background:#f6c000;text-align:center;font-size:15.5px;line-height:22px;font-weight:bold;color:#183648;padding-left:3px;-webkit-text-stroke:0.3px #183648">1</div>
<div class="a" style="left:800.5px;top:403.5px;font-size:17.2px;line-height:23.3px;color:#222;white-space:nowrap">Pagu Belanja Kementerian Negara/Lembaga sebesar<br>Rp9,55 triliun telah direalisasikan sebesar Rp350,32<br>miliar (3,67%);</div>
<div class="a" style="left:757px;top:486.5px;width:30px;height:24.5px;border-radius:50%;background:#f6c000;text-align:center;font-size:15.5px;line-height:22px;font-weight:bold;color:#183648;padding-left:3px;-webkit-text-stroke:0.3px #183648">2</div>
<div class="a" style="left:800.5px;top:483.5px;font-size:17.2px;line-height:23.3px;color:#222;white-space:nowrap">Fungsi Pendidikan mendapatkan alokasi belanja<br>terbesar yaitu Rp2,66 triliun yang sudah<br>terealisasikan sebesar Rp59,06 miliar (2,22%).</div>
<div class="a" style="left:757px;top:574px;width:30px;height:24.5px;border-radius:50%;background:#f6c000;text-align:center;font-size:15.5px;line-height:22px;font-weight:bold;color:#183648;padding-left:3px;-webkit-text-stroke:0.3px #183648">3</div>
<div class="a" style="left:802.7px;top:570.7px;font-size:17.2px;line-height:23.3px;color:#222;white-space:nowrap">Realisasi Belanja Fungsi Pertahanan menunjukkan<br>kinerja tertinggi sebesar 6,85% melebihi target<br>realisasi belanja Januari sebesar 5%.</div>
<div class="a" style="left:757px;top:659.7px;width:30px;height:24.5px;border-radius:50%;background:#f6c000;text-align:center;font-size:15.5px;line-height:22px;font-weight:bold;color:#183648;padding-left:3px;-webkit-text-stroke:0.3px #183648">4</div>
<div class="a" style="left:803.4px;top:653.6px;font-size:17.2px;line-height:23.3px;color:#222;white-space:nowrap">Alokasi Belanja Bantuan Sosial (57) sebesar<br>Rp17,45 miliar utamanya digunakan untuk<br>penyaluran beasiswa, PIP/KIP Kuliah, dll</div>
<div class="a" style="left:757px;top:740.5px;width:30px;height:24.5px;border-radius:50%;background:#f6c000;text-align:center;font-size:15.5px;line-height:22px;font-weight:bold;color:#183648;padding-left:3px;-webkit-text-stroke:0.3px #183648">5</div>
<div class="a" style="left:800.8px;top:742.3px;font-size:17.2px;line-height:23.3px;color:#222;white-space:nowrap">Fungsi Pariwasata dan Budaya yang diampu oleh<br>satker Dinas Pariwisata Provinsi Banten, belum<br>dapat merealisasikan Belanja sama sekali.</div>
<div class="a" style="left:29px;top:931.5px;width:1003px;height:3.5px;background:linear-gradient(90deg,#155a80,#1f8fb8 50%,#22aacb)"></div>
<div class="a" style="left:1032px;top:931.5px;width:154px;height:3.5px;background:#7d63a0"></div>
<div class="a" style="left:12.5px;top:912.5px;width:101px;height:24.5px;border-radius:4px;background:rgba(90,90,90,.78)"></div>
<div class="a" style="left:19px;top:918px;font-size:12.5px;line-height:15px;color:#fff;white-space:nowrap">Bela Amalia</div>
<svg style="left:92px;top:917px" width="14" height="15" viewBox="0 0 14 15"><rect x="4.5" y="1" width="5" height="8" rx="2.5" fill="none" stroke="#fff" stroke-width="1.2"/><path d="M2.5 7c0 2.5 2 4.5 4.5 4.5s4.5-2 4.5-4.5M7 11.5v2.5" fill="none" stroke="#fff" stroke-width="1.2"/><path d="M1 1l12 13" stroke="#fff" stroke-width="1.2"/></svg>
</div><!--/slidec-->
<div id="panel" class="a">
<div class="a" style="left:-1268px;top:-97px;width:0;height:0">
<svg style="left:1295px;top:122px" width="9" height="14"><path d="M7.5 1L1.5 7l6 6" fill="none" stroke="#424242" stroke-width="1.3"/></svg>
<div class="a" style="left:1317px;top:120px;font-size:14.2px;line-height:18px;font-weight:bold;color:#242424;white-space:nowrap">In this meeting <span style="font-weight:normal;color:#616161">(52)</span></div>
<div class="a" style="left:1471px;top:117px;width:75px;height:25px;border-radius:4px;background:#fff;border:1px solid #d6d6d6;text-align:center;font-size:12.8px;line-height:23px;font-weight:bold;color:#242424">Mute all</div>
<svg style="left:1556px;top:122px" width="14" height="14"><path d="M1 1l12 12M13 1L1 13" stroke="#424242" stroke-width="1.3"/></svg>
<div class="a" style="left:1268px;top:158px;width:332px;height:1px;background:#e0e0e0"></div>
<div class="a" style="left:1289px;top:175.5px;width:33px;height:33px;border-radius:50%;background:#dcdaf0;text-align:center;line-height:34px;font-size:13.5px;font-weight:normal;-webkit-text-stroke:0.45px #4f4a86;color:#4f4a86">IT</div>
<div class="a" style="left:1331px;top:184px;font-size:14px;line-height:18px;color:#484848;white-space:nowrap">Ita Puspita BPK... (Unverified)</div>
<svg style="left:1547px;top:183px" width="17" height="18" viewBox="0 0 17 18"><rect x="5" y="1" width="6.5" height="10" rx="3.2" fill="none" stroke="#424242" stroke-width="1.3"/><path d="M2.3 8.2c0 3.3 2.7 5.8 6 5.8s6-2.5 6-5.8M8.3 14v3" fill="none" stroke="#424242" stroke-width="1.3"/><path d="M1 1.5l15 15" stroke="#f5f5f5" stroke-width="2.6"/><path d="M1 1.5l15 15" stroke="#424242" stroke-width="1.3"/></svg>
<svg style="left:1289px;top:225.5px" width="33" height="33" viewBox="0 0 33 33"><clipPath id="c1"><circle cx="16.5" cy="16.5" r="16.5"/></clipPath><g clip-path="url(#c1)"><rect width="33" height="33" fill="#d6cdb8"/><rect width="6" height="33" fill="#e6e2dc"/><path d="M0 33C0 22 3 12 7 6c4-5 11-5 14 0 3 4 3 10 2 15l4 12z" fill="#1c2034"/><ellipse cx="13.5" cy="12.5" rx="5.2" ry="3.8" fill="#ecebee"/><rect x="21" y="8" width="10" height="3" fill="#b8a050" opacity=".7"/></g></svg>
<div class="a" style="left:1331px;top:234px;font-size:14px;line-height:18px;color:#484848;white-space:nowrap">Jubaidah</div>
<svg style="left:1547px;top:233px" width="17" height="18" viewBox="0 0 17 18"><rect x="5" y="1" width="6.5" height="10" rx="3.2" fill="none" stroke="#424242" stroke-width="1.3"/><path d="M2.3 8.2c0 3.3 2.7 5.8 6 5.8s6-2.5 6-5.8M8.3 14v3" fill="none" stroke="#424242" stroke-width="1.3"/><path d="M1 1.5l15 15" stroke="#f5f5f5" stroke-width="2.6"/><path d="M1 1.5l15 15" stroke="#424242" stroke-width="1.3"/></svg>
<div class="a" style="left:1289px;top:275.5px;width:33px;height:33px;border-radius:50%;background:#eed8de;text-align:center;line-height:34px;font-size:13.5px;font-weight:normal;-webkit-text-stroke:0.45px #7d2c3f;color:#7d2c3f">KT</div>
<div class="a" style="left:1331px;top:284px;font-size:14px;line-height:18px;color:#484848;white-space:nowrap">Kaban BKAD K...&nbsp; (Unverified)</div>
<svg style="left:1547px;top:283px" width="17" height="18" viewBox="0 0 17 18"><rect x="5" y="1" width="6.5" height="10" rx="3.2" fill="none" stroke="#424242" stroke-width="1.3"/><path d="M2.3 8.2c0 3.3 2.7 5.8 6 5.8s6-2.5 6-5.8M8.3 14v3" fill="none" stroke="#424242" stroke-width="1.3"/><path d="M1 1.5l15 15" stroke="#f5f5f5" stroke-width="2.6"/><path d="M1 1.5l15 15" stroke="#424242" stroke-width="1.3"/></svg>
<svg style="left:1289px;top:325.5px" width="33" height="33" viewBox="0 0 33 33"><clipPath id="c3"><circle cx="16.5" cy="16.5" r="16.5"/></clipPath><g clip-path="url(#c3)"><rect width="33" height="33" fill="#8d8680"/><rect width="33" height="12" fill="#cfcac4"/><rect x="3" y="10" width="27" height="5" fill="#b2aba4"/><path d="M7 33V24c0-4 4-6 9.5-6S26 20 26 24v9z" fill="#a9c1e0"/><path d="M15.5 19l1 0 1.2 10-1.7 3-1.5-3z" fill="#1f2a4a"/><ellipse cx="16.5" cy="11" rx="3.5" ry="4.5" fill="#b08a70"/><path d="M13 9c0-3 7-3 7 0z" fill="#2a2520"/><rect y="28" width="33" height="5" fill="#3a3530"/></g></svg>
<div class="a" style="left:1331px;top:334px;font-size:14px;line-height:18px;color:#484848;white-space:nowrap">Kartika Djati</div>
<svg style="left:1547px;top:333px" width="17" height="18" viewBox="0 0 17 18"><rect x="5" y="1" width="6.5" height="10" rx="3.2" fill="none" stroke="#424242" stroke-width="1.3"/><path d="M2.3 8.2c0 3.3 2.7 5.8 6 5.8s6-2.5 6-5.8M8.3 14v3" fill="none" stroke="#424242" stroke-width="1.3"/><path d="M1 1.5l15 15" stroke="#f5f5f5" stroke-width="2.6"/><path d="M1 1.5l15 15" stroke="#424242" stroke-width="1.3"/></svg>
<svg style="left:1289px;top:375.5px" width="33" height="33" viewBox="0 0 33 33"><clipPath id="c4"><circle cx="16.5" cy="16.5" r="16.5"/></clipPath><g clip-path="url(#c4)"><rect width="33" height="33" fill="#c92f3a"/><path d="M5 33c1-9 4-14 6-19 1-7 4-10 6-10s5 3 6 10c2 5 5 10 6 19z" fill="#7393bb"/><path d="M11 15c0-6 2.5-9 6-9s6 3 6 9c0 2-1 4-2 5h-8c-1-1-2-3-2-5z" fill="#141a25"/><ellipse cx="17" cy="14.5" rx="4.2" ry="5" fill="#e3bca4"/></g></svg>
<div class="a" style="left:1331px;top:384px;font-size:14px;line-height:18px;color:#484848;white-space:nowrap">Laila Chairani , SH</div>
<svg style="left:1547px;top:383px" width="17" height="18" viewBox="0 0 17 18"><rect x="5" y="1" width="6.5" height="10" rx="3.2" fill="none" stroke="#424242" stroke-width="1.3"/><path d="M2.3 8.2c0 3.3 2.7 5.8 6 5.8s6-2.5 6-5.8M8.3 14v3" fill="none" stroke="#424242" stroke-width="1.3"/><path d="M1 1.5l15 15" stroke="#f5f5f5" stroke-width="2.6"/><path d="M1 1.5l15 15" stroke="#424242" stroke-width="1.3"/></svg>
<div class="a" style="left:1289px;top:425.5px;width:33px;height:33px;border-radius:50%;background:#d4ece0;text-align:center;line-height:34px;font-size:13.5px;font-weight:normal;-webkit-text-stroke:0.45px #1f6b45;color:#1f6b45">M</div>
<div class="a" style="left:1331px;top:434px;font-size:14px;line-height:18px;color:#484848;white-space:nowrap">madut.2 (External)</div>
<svg style="left:1547px;top:433px" width="17" height="18" viewBox="0 0 17 18"><rect x="5" y="1" width="6.5" height="10" rx="3.2" fill="#242424"/><path d="M2.3 8.2c0 3.3 2.7 5.8 6 5.8s6-2.5 6-5.8M8.3 14v3" fill="none" stroke="#242424" stroke-width="1.5"/></svg>
<div class="a" style="left:1289px;top:475.5px;width:33px;height:33px;border-radius:50%;background:#f9ecc8;text-align:center;line-height:34px;font-size:13.5px;font-weight:normal;-webkit-text-stroke:0.45px #8a6512;color:#8a6512">MA</div>
<div class="a" style="left:1331px;top:484px;font-size:14px;line-height:18px;color:#484848;white-space:nowrap">Martha Adelya (Unverified)</div>
<svg style="left:1547px;top:483px" width="17" height="18" viewBox="0 0 17 18"><rect x="5" y="1" width="6.5" height="10" rx="3.2" fill="none" stroke="#424242" stroke-width="1.3"/><path d="M2.3 8.2c0 3.3 2.7 5.8 6 5.8s6-2.5 6-5.8M8.3 14v3" fill="none" stroke="#424242" stroke-width="1.3"/><path d="M1 1.5l15 15" stroke="#f5f5f5" stroke-width="2.6"/><path d="M1 1.5l15 15" stroke="#424242" stroke-width="1.3"/></svg>
<svg style="left:1289px;top:525.5px" width="33" height="33" viewBox="0 0 33 33"><clipPath id="c7"><circle cx="16.5" cy="16.5" r="16.5"/></clipPath><g clip-path="url(#c7)"><rect width="33" height="33" fill="#6f9452"/><rect width="33" height="9" fill="#dcdde2"/><rect x="3" y="6" width="27" height="3" fill="#a8a8b0"/><path d="M6 33V16c0-5 4-7 9-7s9 2 9 7v17z" fill="#4a3a30"/><ellipse cx="15" cy="19" rx="6" ry="6.5" fill="#c69a80"/><path d="M9 21h12v5c0 2-3 4-6 4s-6-2-6-4z" fill="#9fdbe4"/></g></svg>
<div class="a" style="left:1331px;top:534px;font-size:14px;line-height:18px;color:#484848;white-space:nowrap">Maureen Christine Siregar</div>
<svg style="left:1547px;top:533px" width="17" height="18" viewBox="0 0 17 18"><rect x="5" y="1" width="6.5" height="10" rx="3.2" fill="none" stroke="#424242" stroke-width="1.3"/><path d="M2.3 8.2c0 3.3 2.7 5.8 6 5.8s6-2.5 6-5.8M8.3 14v3" fill="none" stroke="#424242" stroke-width="1.3"/><path d="M1 1.5l15 15" stroke="#f5f5f5" stroke-width="2.6"/><path d="M1 1.5l15 15" stroke="#424242" stroke-width="1.3"/></svg>
<svg style="left:1289px;top:575.5px" width="33" height="33" viewBox="0 0 33 33"><clipPath id="c8"><circle cx="16.5" cy="16.5" r="16.5"/></clipPath><g clip-path="url(#c8)"><rect width="33" height="33" fill="#7b7e86"/><rect width="33" height="14" fill="#9ea2aa"/><path d="M2 33V26c0-4 6-7 14.5-7S31 22 31 26v7z" fill="#d3d6de"/><path d="M16 20h1.2l1 10-1.6 3-1.6-3z" fill="#888c96"/><ellipse cx="16.5" cy="12" rx="4.5" ry="6" fill="#5a4a42"/></g></svg>
<div class="a" style="left:1331px;top:584px;font-size:14px;line-height:18px;color:#484848;white-space:nowrap">Mokhamad Irfi Naofal</div>
<svg style="left:1547px;top:583px" width="17" height="18" viewBox="0 0 17 18"><rect x="5" y="1" width="6.5" height="10" rx="3.2" fill="none" stroke="#424242" stroke-width="1.3"/><path d="M2.3 8.2c0 3.3 2.7 5.8 6 5.8s6-2.5 6-5.8M8.3 14v3" fill="none" stroke="#424242" stroke-width="1.3"/><path d="M1 1.5l15 15" stroke="#f5f5f5" stroke-width="2.6"/><path d="M1 1.5l15 15" stroke="#424242" stroke-width="1.3"/></svg>
<div class="a" style="left:1289px;top:625.5px;width:33px;height:33px;border-radius:50%;background:#d2e5da;text-align:center;line-height:34px;font-size:13.5px;font-weight:normal;-webkit-text-stroke:0.45px #24533a;color:#24533a">SK</div>
<div class="a" style="left:1331px;top:634px;font-size:14px;line-height:18px;color:#484848;white-space:nowrap">Muhammad Indra Kesuma, ST</div>
<svg style="left:1547px;top:633px" width="17" height="18" viewBox="0 0 17 18"><rect x="5" y="1" width="6.5" height="10" rx="3.2" fill="none" stroke="#424242" stroke-width="1.3"/><path d="M2.3 8.2c0 3.3 2.7 5.8 6 5.8s6-2.5 6-5.8M8.3 14v3" fill="none" stroke="#424242" stroke-width="1.3"/><path d="M1 1.5l15 15" stroke="#f5f5f5" stroke-width="2.6"/><path d="M1 1.5l15 15" stroke="#424242" stroke-width="1.3"/></svg>
<div class="a" style="left:1289px;top:675.5px;width:33px;height:33px;border-radius:50%;background:#cfe4d6;text-align:center;line-height:34px;font-size:13.5px;font-weight:normal;-webkit-text-stroke:0.45px #24533a;color:#24533a">MF</div>
<div class="a" style="left:1331px;top:684px;font-size:14px;line-height:18px;color:#484848;white-space:nowrap">Muhammad Sy... (Unverified)</div>
<svg style="left:1547px;top:683px" width="17" height="18" viewBox="0 0 17 18"><rect x="5" y="1" width="6.5" height="10" rx="3.2" fill="none" stroke="#424242" stroke-width="1.3"/><path d="M2.3 8.2c0 3.3 2.7 5.8 6 5.8s6-2.5 6-5.8M8.3 14v3" fill="none" stroke="#424242" stroke-width="1.3"/><path d="M1 1.5l15 15" stroke="#f5f5f5" stroke-width="2.6"/><path d="M1 1.5l15 15" stroke="#424242" stroke-width="1.3"/></svg>
<div class="a" style="left:1289px;top:725.5px;width:33px;height:33px;border-radius:50%;background:#d6eef3;text-align:center;line-height:34px;font-size:13.5px;font-weight:normal;-webkit-text-stroke:0.45px #23606c;color:#23606c">NL</div>
<div class="a" style="left:1331px;top:734px;font-size:14px;line-height:18px;color:#484848;white-space:nowrap">Nova N Lubis (... (Unverified)</div>
<svg style="left:1547px;top:733px" width="17" height="18" viewBox="0 0 17 18"><rect x="5" y="1" width="6.5" height="10" rx="3.2" fill="none" stroke="#424242" stroke-width="1.3"/><path d="M2.3 8.2c0 3.3 2.7 5.8 6 5.8s6-2.5 6-5.8M8.3 14v3" fill="none" stroke="#424242" stroke-width="1.3"/><path d="M1 1.5l15 15" stroke="#f5f5f5" stroke-width="2.6"/><path d="M1 1.5l15 15" stroke="#424242" stroke-width="1.3"/></svg>
<div class="a" style="left:1289px;top:775.5px;width:33px;height:33px;border-radius:50%;background:#c9d7ec;text-align:center;line-height:34px;font-size:13.5px;font-weight:normal;-webkit-text-stroke:0.45px #1d3a6b;color:#1d3a6b">NH</div>
<div class="a" style="left:1331px;top:784px;font-size:14px;line-height:18px;color:#484848;white-space:nowrap">Nurul Huda</div>
<svg style="left:1514px;top:783px" width="17" height="18" viewBox="0 0 17 18"><rect x="5" y="1" width="6.5" height="10" rx="3.2" fill="none" stroke="#424242" stroke-width="1.3"/><path d="M2.3 8.2c0 3.3 2.7 5.8 6 5.8s6-2.5 6-5.8M8.3 14v3" fill="none" stroke="#424242" stroke-width="1.3"/><path d="M1 1.5l15 15" stroke="#f5f5f5" stroke-width="2.6"/><path d="M1 1.5l15 15" stroke="#424242" stroke-width="1.3"/></svg>
<svg style="left:1540px;top:791px" width="15" height="3"><circle cx="1.5" cy="1.5" r="1.2" fill="#424242"/><circle cx="7.5" cy="1.5" r="1.2" fill="#424242"/><circle cx="13.5" cy="1.5" r="1.2" fill="#424242"/></svg>
<div class="a" style="left:1289px;top:825.5px;width:33px;height:33px;border-radius:50%;background:#f5d2d4;text-align:center;line-height:34px;font-size:13.5px;font-weight:normal;-webkit-text-stroke:0.45px #872a36;color:#872a36">PL</div>
<div class="a" style="left:1331px;top:834px;font-size:14px;line-height:18px;color:#484848;white-space:nowrap">Perbendaharaa... (Unverified)</div>
<svg style="left:1547px;top:833px" width="17" height="18" viewBox="0 0 17 18"><rect x="5" y="1" width="6.5" height="10" rx="3.2" fill="none" stroke="#424242" stroke-width="1.3"/><path d="M2.3 8.2c0 3.3 2.7 5.8 6 5.8s6-2.5 6-5.8M8.3 14v3" fill="none" stroke="#424242" stroke-width="1.3"/><path d="M1 1.5l15 15" stroke="#f5f5f5" stroke-width="2.6"/><path d="M1 1.5l15 15" stroke="#424242" stroke-width="1.3"/></svg>
<div class="a" style="left:1289px;top:875.5px;width:33px;height:33px;border-radius:50%;background:#d3e3eb;text-align:center;line-height:34px;font-size:13.5px;font-weight:normal;-webkit-text-stroke:0.45px #245468;color:#245468">R</div>
<div class="a" style="left:1331px;top:884px;font-size:14px;line-height:18px;color:#484848;white-space:nowrap">Raden - Bante...&nbsp; (Unverified)</div>
<svg style="left:1547px;top:883px" width="17" height="18" viewBox="0 0 17 18"><rect x="5" y="1" width="6.5" height="10" rx="3.2" fill="none" stroke="#424242" stroke-width="1.3"/><path d="M2.3 8.2c0 3.3 2.7 5.8 6 5.8s6-2.5 6-5.8M8.3 14v3" fill="none" stroke="#424242" stroke-width="1.3"/><path d="M1 1.5l15 15" stroke="#f5f5f5" stroke-width="2.6"/><path d="M1 1.5l15 15" stroke="#424242" stroke-width="1.3"/></svg>
<div class="a" style="left:1289px;top:925.5px;width:33px;height:33px;border-radius:50%;background:#d3e7da;text-align:center;line-height:34px;font-size:13.5px;font-weight:normal;-webkit-text-stroke:0.45px #24533a;color:#24533a">R</div>
<div class="a" style="left:1331px;top:934px;font-size:14px;line-height:18px;color:#484848;white-space:nowrap">Ridwan (Unverified)</div>
<svg style="left:1547px;top:933px" width="17" height="18" viewBox="0 0 17 18"><rect x="5" y="1" width="6.5" height="10" rx="3.2" fill="none" stroke="#424242" stroke-width="1.3"/><path d="M2.3 8.2c0 3.3 2.7 5.8 6 5.8s6-2.5 6-5.8M8.3 14v3" fill="none" stroke="#424242" stroke-width="1.3"/><path d="M1 1.5l15 15" stroke="#f5f5f5" stroke-width="2.6"/><path d="M1 1.5l15 15" stroke="#424242" stroke-width="1.3"/></svg>
<div class="a" style="left:1590px;top:592px;width:5px;height:217px;border-radius:3px;background:#8a8a8a"></div>
</div></div>
<div id="taskbar" class="a">
<div class="a" style="left:0;top:-950px;width:0;height:0">
<svg style="left:20px;top:962px" width="30" height="26" viewBox="0 0 30 26"><defs><linearGradient id="cl" x1="0" y1="0" x2="0" y2="1"><stop offset="0" stop-color="#d8e8fc"/><stop offset="1" stop-color="#86aee8"/></linearGradient></defs><path d="M5.5 24h19a5 5 0 0 0 .5-10 8 8 0 0 0-15-2.5A6.5 6.5 0 0 0 5.5 24z" fill="url(#cl)" stroke="#a8c4ea" stroke-width="0.6"/></svg>
<div class="a" style="left:32px;top:957px;width:18px;height:18px;border-radius:50%;background:#c42b1c;color:#fff;font-size:11px;line-height:18px;text-align:center">1</div>
<div class="a" style="left:54px;top:960px;font-size:12px;line-height:15px;color:#1a1a1a;white-space:nowrap">31°C</div>
<div class="a" style="left:54px;top:977px;font-size:12px;line-height:15px;color:#424242;white-space:nowrap">Berawan</div>
<svg style="left:550px;top:963px" width="24" height="24" viewBox="0 0 24 24"><defs><linearGradient id="wl" x1="0" y1="0" x2="1" y2="1"><stop offset="0" stop-color="#28c2f8"/><stop offset="1" stop-color="#0a6fd6"/></linearGradient></defs><rect x="0" y="0" width="11.4" height="11.4" fill="url(#wl)"/><rect x="12.6" y="0" width="11.4" height="11.4" fill="url(#wl)"/><rect x="0" y="12.6" width="11.4" height="11.4" fill="url(#wl)"/><rect x="12.6" y="12.6" width="11.4" height="11.4" fill="url(#wl)"/></svg>
<div class="a" style="left:589px;top:959px;width:103px;height:32px;border-radius:16px;background:#f3f3f3;border:1px solid #e2e2e2"></div>
<svg style="left:613px;top:967px" width="16" height="16" viewBox="0 0 16 16"><circle cx="9.5" cy="6.5" r="5" fill="none" stroke="#1a1a1a" stroke-width="1.5"/><path d="M6 10l-4.5 4.5" stroke="#1a1a1a" stroke-width="1.7" stroke-linecap="round"/></svg>
<div class="a" style="left:632px;top:967px;font-size:12.5px;line-height:16px;color:#1a1a1a">Search</div>
<div class="a" style="left:713px;top:962px;width:18px;height:17px;background:#f4f4f4;border:1px solid #cfcfcf"></div>
<div class="a" style="left:706px;top:969px;width:18px;height:17px;background:#1f1f1f;border-radius:1px"></div>
<div class="a" style="left:711px;top:969px;width:13px;height:12px;background:#b8b8b8"></div>
<svg style="left:751px;top:963px" width="26" height="26" viewBox="0 0 26 26"><defs><linearGradient id="ch" x1="0" y1="0" x2="1" y2="1"><stop offset="0" stop-color="#8f7ae6"/><stop offset="1" stop-color="#5a4fc7"/></linearGradient></defs><path d="M13 2a11 11 0 1 1-5.5 20.5L2 24l1.5-5A11 11 0 0 1 13 2z" fill="url(#ch)"/><rect x="7" y="9" width="9" height="8" rx="1.5" fill="#fff"/><path d="M16 12l4-2.5v7L16 14z" fill="#fff"/></svg>
<div class="a" style="left:766px;top:957px;width:17px;height:17px;border-radius:50%;background:#1b7a8f;border:1.5px solid #dadada;color:#fff;font-size:10px;line-height:14px;text-align:center">1</div>
<svg style="left:797px;top:962px" width="26" height="26" viewBox="0 0 26 26"><path d="M8 6V4.5a2 2 0 0 1 2-2h6a2 2 0 0 1 2 2V6" fill="none" stroke="#1e67b8" stroke-width="1.6"/><rect x="1" y="6" width="24" height="19" rx="3" fill="#1b4f9a"/><rect x="8" y="11" width="4.6" height="4.6" fill="#f25022"/><rect x="13.4" y="11" width="4.6" height="4.6" fill="#7fba00"/><rect x="8" y="16.4" width="4.6" height="4.6" fill="#00a4ef"/><rect x="13.4" y="16.4" width="4.6" height="4.6" fill="#ffb900"/></svg>
<svg style="left:843px;top:963px" width="27" height="24" viewBox="0 0 27 24"><path d="M1 3a2 2 0 0 1 2-2h7l3 3h11a2 2 0 0 1 2 2v15a2 2 0 0 1-2 2H3a2 2 0 0 1-2-2z" fill="#e8a914"/><rect x="1" y="7" width="26" height="16" rx="2" fill="#ffd04a"/><rect x="9" y="15" width="10" height="3" rx="1" fill="#1f7ad6"/></svg>
<div class="a" style="left:853px;top:992px;width:7px;height:3px;border-radius:2px;background:#7a7a7a"></div>
<svg style="left:889px;top:962px" width="26" height="26" viewBox="0 0 26 26"><defs><linearGradient id="ed" x1="0" y1="0" x2="1" y2="1"><stop offset="0" stop-color="#3bd671"/><stop offset=".5" stop-color="#1a9bd8"/><stop offset="1" stop-color="#0c59a4"/></linearGradient></defs><circle cx="13" cy="13" r="12" fill="url(#ed)"/><path d="M8 14c0-4 3-6 6-6 3.5 0 5 2 5 4h-8c0 3 2.5 5 6 5 2 0 4-.8 5.5-2-1 4.5-5 8-10 8" fill="#dadada" opacity=".9"/></svg>
<svg style="left:935px;top:962px" width="26" height="26" viewBox="0 0 26 26"><circle cx="13" cy="13" r="12.5" fill="#db4437"/><path d="M13 13L2.2 19.2A12.5 12.5 0 0 0 13 25.5 12.5 12.5 0 0 0 23.8 19.2z" fill="#0f9d58"/><path d="M13 13h12.5A12.5 12.5 0 0 1 23.8 19.2L13 25.5z" fill="#ffcd40"/><path d="M13 13L2.2 19.2A12.5 12.5 0 0 1 2.2 6.8z" fill="#0f9d58" opacity="0"/><circle cx="13" cy="13" r="5.6" fill="#fff"/><circle cx="13" cy="13" r="4.4" fill="#1a73e8"/></svg>
<div class="a" style="left:945px;top:992px;width:7px;height:3px;border-radius:2px;background:#7a7a7a"></div>
<div class="a" style="left:974px;top:955px;width:40px;height:40px;border-radius:4px;background:#ececec;border:1px solid #e2e2e2"></div>
<svg style="left:981px;top:963px" width="26" height="26" viewBox="0 0 26 26"><circle cx="14" cy="4" r="3.3" fill="#7b83eb"/><rect x="11" y="8" width="13" height="11" rx="1.5" fill="#7b83eb"/><rect x="1" y="6" width="14" height="14" rx="1.5" fill="#4b53bc"/><path d="M4.5 9.5h7M8 9.5v8" stroke="#fff" stroke-width="2"/><rect x="5" y="19" width="19" height="6" rx="1" fill="#20d6c8"/><text x="14.5" y="24" font-size="5" font-weight="bold" text-anchor="middle" fill="#0d3a57" font-family="Liberation Sans">NEW</text></svg>
<div class="a" style="left:995px;top:958px;width:16px;height:16px;border-radius:50%;background:#c42b1c;color:#fff;font-size:10px;line-height:16px;text-align:center">5</div>
<div class="a" style="left:986px;top:992px;width:19px;height:3px;border-radius:2px;background:#4b7c94"></div>
<svg style="left:1026px;top:962px" width="27" height="26" viewBox="0 0 27 26"><rect x="8" y="1" width="18" height="24" rx="2" fill="#21a366"/><rect x="8" y="9" width="18" height="8" fill="#107c41"/><rect x="8" y="17" width="18" height="8" rx="2" fill="#185c37"/><rect x="1" y="6" width="13" height="14" rx="1.5" fill="#107c41"/><path d="M4.5 9l6 8M10.5 9l-6 8" stroke="#fff" stroke-width="1.7"/></svg>
<div class="a" style="left:1036px;top:992px;width:7px;height:3px;border-radius:2px;background:#7a7a7a"></div>
<svg style="left:1322px;top:970px" width="14" height="8"><path d="M1 7l6-6 6 6" fill="none" stroke="#1a1a1a" stroke-width="1.3"/></svg>
<svg style="left:1345px;top:965px" width="19" height="20" viewBox="0 0 19 20"><path d="M3 9a6.5 6.5 0 0 1 11-4.5M16 9a6.5 6.5 0 0 1-11 5" fill="none" stroke="#1a1a1a" stroke-width="1.4"/><path d="M14.5 1.5v3.5H11M4.5 17.5V14H8" fill="none" stroke="#1a1a1a" stroke-width="1.4"/><circle cx="14.5" cy="15.5" r="3.5" fill="#e81123"/></svg>
<svg style="left:1377px;top:965px" width="13" height="20" viewBox="0 0 13 20"><rect x="3.5" y="1" width="6" height="11" rx="3" fill="none" stroke="#3f7fa8" stroke-width="1.4"/><path d="M1 9c0 3 2.5 5.5 5.5 5.5S12 12 12 9M6.5 14.5V18" fill="none" stroke="#3f7fa8" stroke-width="1.4"/></svg>
<svg style="left:1407px;top:966px" width="19" height="15" viewBox="0 0 19 15"><path d="M1 5a12 12 0 0 1 17 0M3.5 7.8a8.5 8.5 0 0 1 12 0M6 10.5a5 5 0 0 1 7 0" fill="none" stroke="#1a1a1a" stroke-width="1.4"/><circle cx="9.5" cy="13" r="1.3" fill="#1a1a1a"/></svg>
<svg style="left:1432px;top:967px" width="19" height="16" viewBox="0 0 19 16"><path d="M1 5.5h3l5-4v13l-5-4H1z" fill="none" stroke="#1a1a1a" stroke-width="1.3"/><path d="M12 5a4 4 0 0 1 0 6M14.5 3a7 7 0 0 1 0 10" fill="none" stroke="#1a1a1a" stroke-width="1.2"/></svg>
<svg style="left:1457px;top:966px" width="20" height="16" viewBox="0 0 20 16"><rect x="4" y="5" width="12" height="8" rx="1.2" fill="#1a1a1a"/><rect x="16" y="7" width="2.2" height="4" fill="#1a1a1a"/><path d="M2 2v4M1 6h3v2H1z" stroke="#1a1a1a" stroke-width="1.2" fill="#1a1a1a"/><rect x="6.5" y="7" width="7" height="4" fill="#dadada" opacity=".35"/></svg>
<div class="a" style="left:1490px;top:960px;width:66px;text-align:right;font-size:12.5px;line-height:15px;color:#1a1a1a">14:22</div>
<div class="a" style="left:1470px;top:977px;width:86px;text-align:right;font-size:12.5px;line-height:15px;color:#1a1a1a">28/02/2024</div>
<div class="a" style="left:1562px;top:967px;width:18px;height:17px;border-radius:50%;background:#1b7a8f;color:#fff;font-size:10.5px;line-height:17px;text-align:center">7</div>
</div></div>
</body></html>
